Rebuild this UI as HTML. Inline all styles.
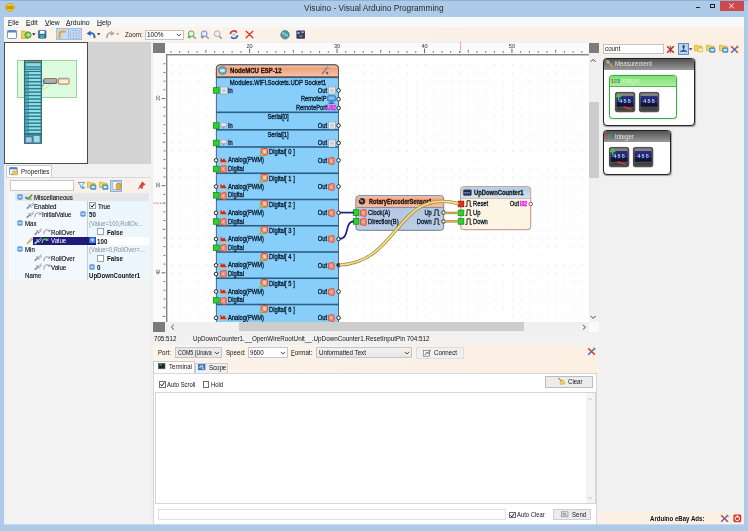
<!DOCTYPE html>
<html lang="en"><head><meta charset="utf-8"><title>Visuino - Visual Arduino Programming</title>
<style>
html,body{margin:0;padding:0;}
body{width:748px;height:531px;position:relative;overflow:hidden;background:#adcbe9;font-family:"Liberation Sans",sans-serif;}
div,svg{position:absolute;}
svg{overflow:visible;}
.t{font-family:"Liberation Sans",sans-serif;}
u{text-decoration-thickness:.5px;text-underline-offset:.2px;text-decoration-color:rgba(0,0,0,.6);}
</style></head><body>
<div id="app" style="left:0;top:0;width:748px;height:531px;filter:blur(.4px);">
<div style="left:0px;top:0px;width:748px;height:531px;background:#adcbe9;"></div>
<div style="left:0px;top:0px;width:748px;height:1px;background:#8fb2d6;"></div>
<div style="left:4px;top:17px;width:740px;height:507px;background:#f1f1f1;"></div>
<div style="left:4px;top:524px;width:740px;height:1px;background:#c9dbee;"></div>
<div class="t" style="top:3px;height:10px;line-height:10px;font-size:8.3px;color:#2a2a2a;white-space:nowrap;left:223.8px;width:300px;text-align:center;">Visuino - Visual Arduino Programming</div>
<svg style="left:5px;top:3.4px;" width="10" height="9" viewBox="0 0 10 9"><ellipse cx="4.8" cy="4.4" rx="4.5" ry="3.9" fill="#f4c81e" stroke="#c9960c" stroke-width=".6"/><path d="M2 3.6h2.3v1.8H2zM5.4 3.6h2.3v1.8H5.4z" fill="none" stroke="#8a5a10" stroke-width=".6"/></svg>
<div style="left:696px;top:7.2px;width:3.6px;height:1px;background:#222;"></div>
<div style="left:710.4px;top:3.8px;width:4.6px;height:3.8px;border:.8px solid #222;border-top-width:1.2px;box-sizing:border-box;"></div>
<div style="left:720px;top:1px;width:24px;height:10.2px;background:#cc4a4b;"></div>
<svg style="left:727px;top:2px;" width="9" height="8" viewBox="0 0 9 8"><path d="M2.2 1.6l4.6 4.6M6.8 1.6l-4.6 4.6" stroke="#fff" stroke-width=".9"/></svg>
<div style="left:4px;top:17px;width:740px;height:9.6px;background:#f7f8f9;"></div>
<div class="t" style="top:18px;height:10px;line-height:10px;font-size:7.2px;color:#111;white-space:nowrap;left:8px;transform:scaleX(0.95);transform-origin:left center;"><u>F</u>ile</div>
<div class="t" style="top:18px;height:10px;line-height:10px;font-size:7.2px;color:#111;white-space:nowrap;left:25.8px;transform:scaleX(0.95);transform-origin:left center;"><u>E</u>dit</div>
<div class="t" style="top:18px;height:10px;line-height:10px;font-size:7.2px;color:#111;white-space:nowrap;left:44.5px;transform:scaleX(0.95);transform-origin:left center;"><u>V</u>iew</div>
<div class="t" style="top:18px;height:10px;line-height:10px;font-size:7.2px;color:#111;white-space:nowrap;left:65.5px;transform:scaleX(0.95);transform-origin:left center;"><u>A</u>rduino</div>
<div class="t" style="top:18px;height:10px;line-height:10px;font-size:7.2px;color:#111;white-space:nowrap;left:97px;transform:scaleX(0.95);transform-origin:left center;"><u>H</u>elp</div>
<div style="left:4px;top:26.6px;width:740px;height:14.6px;background:linear-gradient(90deg,#fcf3ea,#fcefe4);"></div>
<svg style="left:7px;top:29.5px;" width="10" height="9" viewBox="0 0 10 9"><rect x=".5" y=".5" width="9" height="8" rx="1" fill="#fdfdfd" stroke="#5a8fd0" stroke-width=".9"/><rect x=".5" y=".5" width="9" height="2" fill="#4d86cf"/><path d="M6 8.4l3-1v1z" fill="#e8a33a"/></svg>
<svg style="left:20.5px;top:29.5px;" width="11" height="9" viewBox="0 0 11 9"><path d="M.6 1h3l.8 1h2.2v6.4H.6z" fill="#f2d24e" stroke="#b89a20" stroke-width=".6"/><circle cx="7" cy="5" r="3.2" fill="#6cc04a" stroke="#3d8f28" stroke-width=".6"/><path d="M5.4 5h3M7.2 3.6L8.6 5 7.2 6.4" fill="none" stroke="#fff" stroke-width=".8"/></svg>
<svg style="left:32px;top:33px;" width="4" height="3" viewBox="0 0 4 3"><path d="M0 .3h3.6L1.8 2.4z" fill="#222"/></svg>
<svg style="left:37.5px;top:29.8px;" width="8.4" height="8.6" viewBox="0 0 8.4 8.6"><rect x=".4" y=".4" width="7.6" height="7.8" rx=".8" fill="#2f6fc4" stroke="#1d4f99" stroke-width=".6"/><rect x="1.8" y=".8" width="4.8" height="3" fill="#f2f6fb"/><rect x="2.2" y="5.2" width="4" height="3" fill="#58b858"/></svg>
<div style="left:55.5px;top:28px;width:26px;height:11.8px;background:#c4daf2;border:1px solid #9cc0e6;box-sizing:border-box;"></div>
<div style="left:68.4px;top:28.5px;width:0.7px;height:10.8px;background:#9cc0e6;"></div>
<svg style="left:58px;top:29.5px;" width="9" height="9" viewBox="0 0 9 9"><path d="M1.5 8.5V4.2C1.5 2.4 2.8 1.5 4.6 1.5H8" fill="none" stroke="#f0a02c" stroke-width="2.2"/></svg>
<svg style="left:70.2px;top:29.6px;" width="9.6" height="9" viewBox="0 0 9.6 9"><path d="M.5.5h8.6v8H.5zM3.4.5v8M6.3.5v8M.5 3.2h8.6M.5 5.8h8.6" fill="#cfe0f4" stroke="#8fb0da" stroke-width=".55"/></svg>
<svg style="left:86px;top:29.5px;" width="9.5" height="9" viewBox="0 0 9.5 9"><path d="M8.4 8.2C9 4.6 7 2.6 3.8 3.2" fill="none" stroke="#2b62c4" stroke-width="1.9"/><path d="M.6 3.6L4.6.4v5.6z" fill="#2b62c4"/></svg>
<svg style="left:96.6px;top:33.2px;" width="4" height="3" viewBox="0 0 4 3"><path d="M0 .3h3.4L1.7 2.3z" fill="#222"/></svg>
<svg style="left:105.5px;top:29.5px;" width="9.5" height="9" viewBox="0 0 9.5 9"><path d="M1.1 8.2C.5 4.6 2.5 2.6 5.7 3.2" fill="none" stroke="#a9acb2" stroke-width="1.7"/><path d="M8.9 3.6L4.9.4v5.6z" fill="#a9acb2"/></svg>
<svg style="left:115.6px;top:33.2px;" width="4" height="3" viewBox="0 0 4 3"><path d="M0 .3h3.4L1.7 2.3z" fill="#999"/></svg>
<div class="t" style="top:30px;height:10px;line-height:10px;font-size:6.6px;color:#222;white-space:nowrap;left:125px;transform:scaleX(0.95);transform-origin:left center;">Zoom:</div>
<div style="left:144.5px;top:29.5px;width:39.5px;height:10.2px;background:#fff;border:1px solid #bfc3c9;box-sizing:border-box;"></div>
<div class="t" style="top:30px;height:10px;line-height:10px;font-size:6.8px;color:#111;white-space:nowrap;left:147px;transform:scaleX(0.95);transform-origin:left center;">100%</div>
<svg style="left:176px;top:32.6px;" width="6" height="4.5" viewBox="0 0 6 4.5"><path d="M.8.9l2.1 2.1L5 .9" fill="none" stroke="#333" stroke-width=".9"/></svg>
<svg style="left:187px;top:29.8px;" width="10" height="9.6" viewBox="0 0 10 9.6"><path d="M5.4 5.4L8.8 8.8" stroke="#9a9f88" stroke-width="1.5"/><circle cx="4.2" cy="3.8" r="2.9" fill="#e2f3e0" stroke="#5fae62" stroke-width="1"/><path d="M2.2 5.4v3.2M.6 7h3.2" stroke="#4aa83c" stroke-width="1.2"/></svg>
<svg style="left:200px;top:29.8px;" width="10" height="9.6" viewBox="0 0 10 9.6"><path d="M5.4 5.4L8.8 8.8" stroke="#9a9f88" stroke-width="1.5"/><circle cx="4.2" cy="3.8" r="2.9" fill="#e2ecf8" stroke="#6a92c8" stroke-width="1"/><path d="M2.2 5.4v3.2M.6 7h3.2" stroke="#5f8ad0" stroke-width="1.2"/></svg>
<svg style="left:212.6px;top:29.8px;" width="10" height="9.6" viewBox="0 0 10 9.6"><path d="M5.4 5.4L8.8 8.8" stroke="#9a9f88" stroke-width="1.5"/><circle cx="4.2" cy="3.8" r="2.9" fill="#eef0f3" stroke="#aab0ba" stroke-width="1"/></svg>
<svg style="left:228.5px;top:29.6px;" width="10" height="9.4" viewBox="0 0 10 9.4"><path d="M1.4 4.2A3.6 3.6 0 0 1 8 2.6" fill="none" stroke="#d0343c" stroke-width="1.6"/><path d="M8.6 5.2A3.6 3.6 0 0 1 2 6.8" fill="none" stroke="#3a62b8" stroke-width="1.6"/><rect x="3.4" y="3.2" width="3.2" height="3" fill="#c9ccd6"/></svg>
<svg style="left:245.2px;top:30px;" width="9" height="9" viewBox="0 0 9 9"><path d="M1.2 1.2l6.6 6.6M7.8 1.2L1.2 7.8" stroke="#d83434" stroke-width="1.3" stroke-linecap="round"/></svg>
<svg style="left:280px;top:29.6px;" width="10" height="9.6" viewBox="0 0 10 9.6"><circle cx="5" cy="4.8" r="4.3" fill="#3f9fb0" stroke="#2c7482" stroke-width=".6"/><path d="M2 3.4c1.4-1 2.6-.4 3 1s1.8 1.4 2.8.4" fill="none" stroke="#d8f0f0" stroke-width="1"/><circle cx="3" cy="6.6" r="1.3" fill="#e06a3a"/></svg>
<svg style="left:296.2px;top:29.8px;" width="9.4" height="9.2" viewBox="0 0 9.4 9.2"><rect x=".4" y=".4" width="8.6" height="8.4" rx=".8" fill="#2c4468"/><path d="M1.6 2h2v2h-2zM5.4 1.6h2.4v1.4H5.4z" fill="#9fb6d6"/><path d="M3 6.4l2-1.8 2.2 2.6z" fill="#e6603c"/></svg>
<div style="left:4px;top:41.6px;width:84px;height:122.6px;background:#fff;border:1px solid #4a4a4a;border-width:1.2px 1.2px 1.2px 1px;box-sizing:border-box;"></div>
<div style="left:88px;top:41.6px;width:62.6px;height:122.4px;background:#d3d3d3;"></div>
<div style="left:150.6px;top:41.6px;width:2.2px;height:482px;background:#f0f0f0;"></div>
<div style="left:17px;top:59.8px;width:60.2px;height:38.2px;background:#ddfbdf;border:1px solid #9ad69a;box-sizing:border-box;"></div>
<svg style="left:24.2px;top:60.2px;" width="17.8" height="83.8" viewBox="0 0 17.8 83.8"><rect x=".4" y=".4" width="17" height="83" fill="#46a5b2" stroke="#275c66" stroke-width=".9"/><rect x=".9" y=".9" width="16" height="1.5" fill="#9a8f80"/><rect x="2.2" y="3.1" width="14.2" height="3.4" fill="#86dbe6"/><path d="M.4 2.6h17" stroke="#275c66" stroke-width=".7"/><rect x="1.4" y="7.35" width="15.2" height="1.4" fill="#7fd4e0"/><path d="M.4 6.9h17" stroke="#275c66" stroke-width=".7"/><rect x="1.4" y="9.65" width="15.2" height="1.4" fill="#7fd4e0"/><path d="M.4 9.2h17" stroke="#275c66" stroke-width=".7"/><rect x="1.2" y="12" width="3.4" height="2.45" fill="#5fa8c0"/><rect x="5" y="12.1" width="11.4" height="1.95" fill="#8fe2ec"/><path d="M.4 11.5h17" stroke="#275c66" stroke-width=".7"/><rect x="1.2" y="15.45" width="3.4" height="2.45" fill="#5fa8c0"/><rect x="5" y="15.55" width="11.4" height="1.95" fill="#8fe2ec"/><path d="M.4 14.95h17" stroke="#275c66" stroke-width=".7"/><rect x="1.2" y="18.9" width="3.4" height="2.45" fill="#5fa8c0"/><rect x="5" y="19" width="11.4" height="1.95" fill="#8fe2ec"/><path d="M.4 18.4h17" stroke="#275c66" stroke-width=".7"/><rect x="1.2" y="22.35" width="3.4" height="2.45" fill="#5fa8c0"/><rect x="5" y="22.45" width="11.4" height="1.95" fill="#8fe2ec"/><path d="M.4 21.85h17" stroke="#275c66" stroke-width=".7"/><rect x="1.2" y="25.8" width="3.4" height="2.45" fill="#5fa8c0"/><rect x="5" y="25.9" width="11.4" height="1.95" fill="#8fe2ec"/><path d="M.4 25.3h17" stroke="#275c66" stroke-width=".7"/><rect x="1.2" y="29.25" width="3.4" height="2.45" fill="#5fa8c0"/><rect x="5" y="29.35" width="11.4" height="1.95" fill="#8fe2ec"/><path d="M.4 28.75h17" stroke="#275c66" stroke-width=".7"/><rect x="1.2" y="32.7" width="3.4" height="2.45" fill="#5fa8c0"/><rect x="5" y="32.8" width="11.4" height="1.95" fill="#8fe2ec"/><path d="M.4 32.2h17" stroke="#275c66" stroke-width=".7"/><rect x="1.2" y="36.15" width="3.4" height="2.45" fill="#5fa8c0"/><rect x="5" y="36.25" width="11.4" height="1.95" fill="#8fe2ec"/><path d="M.4 35.65h17" stroke="#275c66" stroke-width=".7"/><rect x="1.2" y="39.6" width="3.4" height="2.45" fill="#5fa8c0"/><rect x="5" y="39.7" width="11.4" height="1.95" fill="#8fe2ec"/><path d="M.4 39.1h17" stroke="#275c66" stroke-width=".7"/><rect x="1.2" y="43.05" width="3.4" height="2.45" fill="#5fa8c0"/><rect x="5" y="43.15" width="11.4" height="1.95" fill="#8fe2ec"/><path d="M.4 42.55h17" stroke="#275c66" stroke-width=".7"/><rect x="1.2" y="46.5" width="3.4" height="2.45" fill="#5fa8c0"/><rect x="5" y="46.6" width="11.4" height="1.95" fill="#8fe2ec"/><path d="M.4 46h17" stroke="#275c66" stroke-width=".7"/><rect x="1.2" y="49.95" width="3.4" height="2.45" fill="#5fa8c0"/><rect x="5" y="50.05" width="11.4" height="1.95" fill="#8fe2ec"/><path d="M.4 49.45h17" stroke="#275c66" stroke-width=".7"/><rect x="1.2" y="53.4" width="3.4" height="2.45" fill="#5fa8c0"/><rect x="5" y="53.5" width="11.4" height="1.95" fill="#8fe2ec"/><path d="M.4 52.9h17" stroke="#275c66" stroke-width=".7"/><rect x="1.2" y="56.85" width="3.4" height="2.45" fill="#5fa8c0"/><rect x="5" y="56.95" width="11.4" height="1.95" fill="#8fe2ec"/><path d="M.4 56.35h17" stroke="#275c66" stroke-width=".7"/><rect x="1.2" y="60.3" width="3.4" height="2.45" fill="#5fa8c0"/><rect x="5" y="60.4" width="11.4" height="1.95" fill="#8fe2ec"/><path d="M.4 59.8h17" stroke="#275c66" stroke-width=".7"/><rect x="1.2" y="63.75" width="3.4" height="2.45" fill="#5fa8c0"/><rect x="5" y="63.85" width="11.4" height="1.95" fill="#8fe2ec"/><path d="M.4 63.25h17" stroke="#275c66" stroke-width=".7"/><rect x="1.2" y="67.2" width="3.4" height="2.45" fill="#5fa8c0"/><rect x="5" y="67.3" width="11.4" height="1.95" fill="#8fe2ec"/><path d="M.4 66.7h17" stroke="#275c66" stroke-width=".7"/><rect x="1.2" y="70.65" width="3.4" height="2.45" fill="#5fa8c0"/><rect x="5" y="70.75" width="11.4" height="1.95" fill="#8fe2ec"/><path d="M.4 70.15h17" stroke="#275c66" stroke-width=".7"/><rect x="1.2" y="74.1" width="3.4" height="2.45" fill="#5fa8c0"/><rect x="5" y="74.2" width="11.4" height="1.95" fill="#8fe2ec"/><path d="M.4 73.6h17" stroke="#275c66" stroke-width=".7"/><rect x="1.2" y="77.55" width="3.4" height="2.45" fill="#5fa8c0"/><rect x="5" y="77.65" width="11.4" height="1.95" fill="#8fe2ec"/><path d="M.4 77.05h17" stroke="#275c66" stroke-width=".7"/><rect x=".8" y="74.6" width="16.2" height="8.6" fill="#4a8fae"/><rect x="1.6" y="77" width="6.4" height="5.8" fill="#a9c9e4" stroke="#2a4a66" stroke-width=".4"/><rect x="9.2" y="75.4" width="6.8" height="7.4" fill="#9fdbe8" stroke="#2a4a66" stroke-width=".4"/><path d="M.4 74.6h17" stroke="#275c66" stroke-width=".7"/></svg>
<svg style="left:43px;top:78.4px;" width="27" height="7" viewBox="0 0 27 7"><rect x=".8" y=".8" width="13" height="4.6" rx=".6" fill="#9fb2c8" stroke="#3a4a42" stroke-width=".9"/><rect x="1.3" y="1.2" width="12" height="1.3" fill="#e0a58c"/><rect x="15.6" y=".3" width="10.4" height="5.8" rx=".6" fill="#fbeedd" stroke="#b5652c" stroke-width=".9"/><rect x="16.2" y=".8" width="9.2" height="1.3" fill="#b9d3e8"/><path d="M13.8 2.8h2M13.8 4h2" stroke="#c9a63a" stroke-width=".5"/></svg>
<svg style="left:40px;top:80px;" width="12" height="10" viewBox="0 0 12 10"><path d="M2 1.2h2M2 6.6C4 6.6 2.8 2.6 4.2 2.6" fill="none" stroke="#2a2a90" stroke-width=".5"/><path d="M2 9.2C9 9 9 2 19 1" fill="none" stroke="#c9b04a" stroke-width=".5"/></svg>
<div style="left:6px;top:165px;width:45.6px;height:12.4px;background:#fff;border:1px solid #c9cdd3;border-bottom:none;box-sizing:border-box;"></div>
<svg style="left:8.6px;top:167px;" width="9" height="8.6" viewBox="0 0 9 8.6"><rect x=".5" y=".5" width="7.6" height="7" rx=".8" fill="#eef3fa" stroke="#5a82bf" stroke-width=".8"/><rect x=".5" y=".5" width="7.6" height="1.8" fill="#4d7fc8"/><rect x="3.8" y="4" width="4.6" height="4" fill="#f2c45a" stroke="#b98a22" stroke-width=".4"/></svg>
<div class="t" style="top:167px;height:10px;line-height:10px;font-size:6.7px;color:#1a1a1a;white-space:nowrap;left:20.6px;transform:scaleX(0.93);transform-origin:left center;">Properties</div>
<div style="left:6px;top:176.8px;width:144.4px;height:347.2px;background:#f3f3f3;border-top:1px solid #d4d7dc;box-sizing:border-box;"></div>
<div style="left:8.6px;top:179.2px;width:140.4px;height:101px;background:#ecf6fd;"></div>
<div style="left:8.6px;top:192.6px;width:78.8px;height:87.6px;background:#f2f8fd;"></div>
<div style="left:8.6px;top:179.2px;width:140.4px;height:13.4px;background:#fbf1e8;"></div>
<div style="left:10px;top:180.2px;width:64.4px;height:10.8px;background:#fff;border:1px solid #c6cad0;box-sizing:border-box;"></div>
<svg style="left:76.5px;top:181.2px;" width="9" height="9" viewBox="0 0 9 9"><path d="M1 1.4h6.8L5.2 4.4v3L3.6 6.2V4.4z" fill="#eaf3fb" stroke="#4a8cc9" stroke-width=".8"/><circle cx="6.4" cy="6.8" r="1.3" fill="#5aa0dc"/></svg>
<svg style="left:86.6px;top:181px;" width="10" height="9.4" viewBox="0 0 10 9.4"><path d="M.5 1.2h3l.7.9h3.6v4.6H.5z" fill="#f4d55a" stroke="#b89a24" stroke-width=".55"/><rect x="3.6" y="3.8" width="5.4" height="4.6" rx=".6" fill="#58a6dc" stroke="#2e78b4" stroke-width=".5"/><rect x="4.8" y="5" width="3" height="2" fill="#d4ecfa"/></svg>
<svg style="left:98.6px;top:181px;" width="10" height="9.4" viewBox="0 0 10 9.4"><path d="M.5 1.2h3l.7.9h3.6v4.6H.5z" fill="#f4d55a" stroke="#b89a24" stroke-width=".55"/><rect x="3.6" y="3.8" width="5.4" height="4.6" rx=".6" fill="#58a6dc" stroke="#2e78b4" stroke-width=".5"/><rect x="4.8" y="5" width="3" height="2" fill="#d4ecfa"/></svg>
<div style="left:110.4px;top:180.2px;width:11.6px;height:11.4px;background:#bcd6f0;border:1px solid #86b2de;box-sizing:border-box;"></div>
<svg style="left:111.6px;top:181.2px;" width="9.4" height="9.4" viewBox="0 0 9.4 9.4"><rect x="1" y=".8" width="5" height="7.6" fill="#fff" stroke="#8a94a4" stroke-width=".5"/><rect x="4.2" y="2.6" width="4.4" height="6" rx=".6" fill="#f0a648" stroke="#b8741c" stroke-width=".5"/></svg>
<svg style="left:136.5px;top:181.4px;" width="9" height="9" viewBox="0 0 9 9"><path d="M5.4.8l2.8 2.8-1.2.4-1.6 1.6.2 1.8-1 .2L2.4 5.4z" fill="#e04438" stroke="#a82018" stroke-width=".4"/><path d="M3.4 5.6L.9 8.2" stroke="#8a3a34" stroke-width=".8"/></svg>
<div style="left:15px;top:192.6px;width:134px;height:8.72px;background:#e4e6e9;"></div>
<div style="left:87.4px;top:201.32px;width:0.8px;height:78.48px;background:#c4ccd6;"></div>
<div style="left:32.6px;top:237px;width:63.6px;height:8px;background:#1e1b7c;"></div>
<div style="left:96.2px;top:237px;width:52.8px;height:8px;background:#fff;"></div>
<svg style="left:17px;top:193.96px;" width="6" height="6" viewBox="0 0 6 6"><rect x=".3" y=".3" width="5.4" height="5.4" rx="1.4" fill="#5f9fdc"/><rect x="1.4" y="2.4" width="3.2" height="1.2" fill="#eaf4ff"/></svg>
<svg style="left:23.5px;top:192.96px;" width="9" height="8" viewBox="0 0 9 8"><path d="M.6 4.6l2-1 2 1.6-2 1.2z" fill="#3f8ad0"/><path d="M3.4 5.8L7.6 1.4l.8.8L4.4 7z" fill="#4caf50" stroke="#2a7a2e" stroke-width=".4"/><circle cx="6.6" cy="6" r="1.2" fill="#e8a23c"/></svg>
<div class="t" style="top:193px;height:10px;line-height:10px;font-size:6.8px;color:#161616;white-space:nowrap;left:33.5px;transform:scaleX(0.9);transform-origin:left center;-webkit-text-stroke:.15px;">Miscellaneous</div>
<svg style="left:25.5px;top:201.88px;" width="8.4" height="7.6" viewBox="0 0 8.4 7.6"><path d="M1.2 6.4l2.2-2.2" fill="none" stroke="#8a8f98" stroke-width="1.5"/><path d="M2.6 2.4l2.8 2.8" fill="none" stroke="#8a8f98" stroke-width="1.3"/><path d="M4.6 1.8l2 2M5.6 2.2L7.6.4M6.2 3.4l1.8-1.4" fill="none" stroke="#8a8f98" stroke-width=".8"/><circle cx="1.3" cy="6.3" r="1" fill="#8a8f98" opacity=".7"/></svg>
<div class="t" style="top:202px;height:10px;line-height:10px;font-size:6.8px;color:#161616;white-space:nowrap;left:33.8px;transform:scaleX(0.9);transform-origin:left center;-webkit-text-stroke:.15px;">Enabled</div>
<div style="left:89.4px;top:202.18px;width:7px;height:7px;background:#fff;border:1px solid #9aa1aa;box-sizing:border-box;"></div>
<svg style="left:89.4px;top:202.18px;" width="7" height="7" viewBox="0 0 7 7"><path d="M1.6 3.6l1.4 1.6L5.4 1.8" fill="none" stroke="#111" stroke-width="1"/></svg>
<div class="t" style="top:202px;height:10px;line-height:10px;font-size:6.8px;color:#161616;white-space:nowrap;left:97.6px;transform:scaleX(0.9);transform-origin:left center;-webkit-text-stroke:.15px;">True</div>
<svg style="left:25.5px;top:210.6px;" width="8.4" height="7.6" viewBox="0 0 8.4 7.6"><path d="M1.2 6.4l2.2-2.2" fill="none" stroke="#8a8f98" stroke-width="1.5"/><path d="M2.6 2.4l2.8 2.8" fill="none" stroke="#8a8f98" stroke-width="1.3"/><path d="M4.6 1.8l2 2M5.6 2.2L7.6.4M6.2 3.4l1.8-1.4" fill="none" stroke="#8a8f98" stroke-width=".8"/><circle cx="1.3" cy="6.3" r="1" fill="#8a8f98" opacity=".7"/></svg>
<svg style="left:33.6px;top:211px;" width="8" height="6.8" viewBox="0 0 8 6.8"><path d="M.9 6.2C.6 2.2 3.6.6 6.4 2.6" fill="none" stroke="#9aa0a8" stroke-width="1.1"/><path d="M7.4.8v3H4.4z" fill="#9aa0a8"/></svg>
<div class="t" style="top:210px;height:10px;line-height:10px;font-size:6.8px;color:#161616;white-space:nowrap;left:42.4px;transform:scaleX(0.9);transform-origin:left center;-webkit-text-stroke:.15px;">InitialValue</div>
<svg style="left:79.6px;top:211.4px;" width="6" height="6" viewBox="0 0 6 6"><rect x=".3" y=".3" width="5.4" height="5.4" rx="1.4" fill="#5f9fdc"/><rect x="1.4" y="2.4" width="3.2" height="1.2" fill="#eaf4ff"/></svg>
<div class="t" style="top:210px;height:10px;line-height:10px;font-size:6.9px;color:#111;white-space:nowrap;font-weight:bold;left:89px;transform:scaleX(0.9);transform-origin:left center;">50</div>
<svg style="left:17px;top:220.12px;" width="6" height="6" viewBox="0 0 6 6"><rect x=".3" y=".3" width="5.4" height="5.4" rx="1.4" fill="#5f9fdc"/><rect x="1.4" y="2.4" width="3.2" height="1.2" fill="#eaf4ff"/></svg>
<div class="t" style="top:219px;height:10px;line-height:10px;font-size:6.8px;color:#161616;white-space:nowrap;left:24.6px;transform:scaleX(0.9);transform-origin:left center;-webkit-text-stroke:.15px;">Max</div>
<div class="t" style="top:219px;height:10px;line-height:10px;font-size:6.8px;color:#8a8f96;white-space:nowrap;left:89px;transform:scaleX(0.86);transform-origin:left center;">(Value=100,RollOv...</div>
<svg style="left:34.4px;top:228.04px;" width="8.4" height="7.6" viewBox="0 0 8.4 7.6"><path d="M1.2 6.4l2.2-2.2" fill="none" stroke="#8a8f98" stroke-width="1.5"/><path d="M2.6 2.4l2.8 2.8" fill="none" stroke="#8a8f98" stroke-width="1.3"/><path d="M4.6 1.8l2 2M5.6 2.2L7.6.4M6.2 3.4l1.8-1.4" fill="none" stroke="#8a8f98" stroke-width=".8"/><circle cx="1.3" cy="6.3" r="1" fill="#8a8f98" opacity=".7"/></svg>
<svg style="left:42.6px;top:228.44px;" width="8" height="6.8" viewBox="0 0 8 6.8"><path d="M.9 6.2C.6 2.2 3.6.6 6.4 2.6" fill="none" stroke="#9aa0a8" stroke-width="1.1"/><path d="M7.4.8v3H4.4z" fill="#9aa0a8"/></svg>
<div class="t" style="top:228px;height:10px;line-height:10px;font-size:6.8px;color:#161616;white-space:nowrap;left:51.4px;transform:scaleX(0.9);transform-origin:left center;-webkit-text-stroke:.15px;">RollOver</div>
<div style="left:97.4px;top:228.34px;width:7px;height:7px;background:#fff;border:1px solid #9aa1aa;box-sizing:border-box;"></div>
<div class="t" style="top:228px;height:10px;line-height:10px;font-size:6.9px;color:#111;white-space:nowrap;font-weight:bold;left:106.6px;transform:scaleX(0.9);transform-origin:left center;">False</div>
<svg style="left:26px;top:236.56px;" width="8" height="8" viewBox="0 0 8 8"><path d="M1 7l1-2.4L6 .8l1.2 1.2-4 3.8z" fill="#e8c070" stroke="#9a7a3a" stroke-width=".4"/></svg>
<svg style="left:33.6px;top:236.76px;" width="8.4" height="7.6" viewBox="0 0 8.4 7.6"><path d="M1.2 6.4l2.2-2.2" fill="none" stroke="#c9d4ea" stroke-width="1.5"/><path d="M2.6 2.4l2.8 2.8" fill="none" stroke="#c9d4ea" stroke-width="1.3"/><path d="M4.6 1.8l2 2M5.6 2.2L7.6.4M6.2 3.4l1.8-1.4" fill="none" stroke="#c9d4ea" stroke-width=".8"/><circle cx="1.3" cy="6.3" r="1" fill="#c9d4ea" opacity=".7"/></svg>
<svg style="left:41.4px;top:237.16px;" width="8" height="7" viewBox="0 0 8 7"><path d="M1.2 6C1 2.4 3.6 1 6.2 2.8" fill="none" stroke="#5ec04a" stroke-width="1.5"/><path d="M7.4.8v3.2H4.2z" fill="#5ec04a"/></svg>
<div class="t" style="top:236px;height:10px;line-height:10px;font-size:6.8px;color:#fff;white-space:nowrap;left:51.4px;transform:scaleX(0.9);transform-origin:left center;">Value</div>
<svg style="left:88.8px;top:237.36px;" width="7" height="6.4" viewBox="0 0 7 6.4"><rect x=".3" y=".3" width="6.2" height="5.8" rx="1.2" fill="#4f8fe0"/><path d="M1.8 2.2h3.2L3.4 4.4z" fill="#fff"/></svg>
<div class="t" style="top:237px;height:10px;line-height:10px;font-size:6.9px;color:#111;white-space:nowrap;font-weight:bold;left:97.4px;transform:scaleX(0.9);transform-origin:left center;">100</div>
<svg style="left:17px;top:246.28000000000003px;" width="6" height="6" viewBox="0 0 6 6"><rect x=".3" y=".3" width="5.4" height="5.4" rx="1.4" fill="#5f9fdc"/><rect x="1.4" y="2.4" width="3.2" height="1.2" fill="#eaf4ff"/></svg>
<div class="t" style="top:245px;height:10px;line-height:10px;font-size:6.8px;color:#161616;white-space:nowrap;left:24.6px;transform:scaleX(0.9);transform-origin:left center;-webkit-text-stroke:.15px;">Min</div>
<div class="t" style="top:245px;height:10px;line-height:10px;font-size:6.8px;color:#8a8f96;white-space:nowrap;left:89px;transform:scaleX(0.86);transform-origin:left center;">(Value=0,RollOver=...</div>
<svg style="left:34.4px;top:254.2px;" width="8.4" height="7.6" viewBox="0 0 8.4 7.6"><path d="M1.2 6.4l2.2-2.2" fill="none" stroke="#8a8f98" stroke-width="1.5"/><path d="M2.6 2.4l2.8 2.8" fill="none" stroke="#8a8f98" stroke-width="1.3"/><path d="M4.6 1.8l2 2M5.6 2.2L7.6.4M6.2 3.4l1.8-1.4" fill="none" stroke="#8a8f98" stroke-width=".8"/><circle cx="1.3" cy="6.3" r="1" fill="#8a8f98" opacity=".7"/></svg>
<svg style="left:42.6px;top:254.6px;" width="8" height="6.8" viewBox="0 0 8 6.8"><path d="M.9 6.2C.6 2.2 3.6.6 6.4 2.6" fill="none" stroke="#9aa0a8" stroke-width="1.1"/><path d="M7.4.8v3H4.4z" fill="#9aa0a8"/></svg>
<div class="t" style="top:254px;height:10px;line-height:10px;font-size:6.8px;color:#161616;white-space:nowrap;left:51.4px;transform:scaleX(0.9);transform-origin:left center;-webkit-text-stroke:.15px;">RollOver</div>
<div style="left:97.4px;top:254.5px;width:7px;height:7px;background:#fff;border:1px solid #9aa1aa;box-sizing:border-box;"></div>
<div class="t" style="top:254px;height:10px;line-height:10px;font-size:6.9px;color:#111;white-space:nowrap;font-weight:bold;left:106.6px;transform:scaleX(0.9);transform-origin:left center;">False</div>
<svg style="left:34.4px;top:262.92px;" width="8.4" height="7.6" viewBox="0 0 8.4 7.6"><path d="M1.2 6.4l2.2-2.2" fill="none" stroke="#8a8f98" stroke-width="1.5"/><path d="M2.6 2.4l2.8 2.8" fill="none" stroke="#8a8f98" stroke-width="1.3"/><path d="M4.6 1.8l2 2M5.6 2.2L7.6.4M6.2 3.4l1.8-1.4" fill="none" stroke="#8a8f98" stroke-width=".8"/><circle cx="1.3" cy="6.3" r="1" fill="#8a8f98" opacity=".7"/></svg>
<svg style="left:42.6px;top:263.32000000000005px;" width="8" height="6.8" viewBox="0 0 8 6.8"><path d="M.9 6.2C.6 2.2 3.6.6 6.4 2.6" fill="none" stroke="#9aa0a8" stroke-width="1.1"/><path d="M7.4.8v3H4.4z" fill="#9aa0a8"/></svg>
<div class="t" style="top:263px;height:10px;line-height:10px;font-size:6.8px;color:#161616;white-space:nowrap;left:51.4px;transform:scaleX(0.9);transform-origin:left center;-webkit-text-stroke:.15px;">Value</div>
<svg style="left:88.8px;top:263.72px;" width="6" height="6" viewBox="0 0 6 6"><rect x=".3" y=".3" width="5.4" height="5.4" rx="1.4" fill="#5f9fdc"/><rect x="1.4" y="2.4" width="3.2" height="1.2" fill="#eaf4ff"/></svg>
<div class="t" style="top:263px;height:10px;line-height:10px;font-size:6.9px;color:#111;white-space:nowrap;font-weight:bold;left:97.4px;transform:scaleX(0.9);transform-origin:left center;">0</div>
<div class="t" style="top:271px;height:10px;line-height:10px;font-size:6.8px;color:#161616;white-space:nowrap;left:24.6px;transform:scaleX(0.9);transform-origin:left center;-webkit-text-stroke:.15px;">Name</div>
<div class="t" style="top:271px;height:10px;line-height:10px;font-size:6.9px;color:#111;white-space:nowrap;font-weight:bold;left:89px;transform:scaleX(0.88);transform-origin:left center;">UpDownCounter1</div>
<div style="left:153px;top:42.6px;width:445.6px;height:289.4px;background:#fbfbfb;"></div>
<div style="left:153px;top:42.8px;width:12px;height:10.4px;background:#7b7b7b;"></div>
<div style="left:588.6px;top:42.8px;width:10px;height:10.4px;background:#7b7b7b;"></div>
<div style="left:153px;top:322px;width:12px;height:10px;background:#7b7b7b;"></div>
<svg style="left:153px;top:42px;" width="436" height="12" viewBox="0 0 436 12"><path d="M17.9 9.2v1.6" stroke="#555" stroke-width=".9"/><path d="M26.64 9.2v1.6" stroke="#555" stroke-width=".9"/><path d="M35.38 9.2v1.6" stroke="#555" stroke-width=".9"/><path d="M44.13 9.2v1.6" stroke="#555" stroke-width=".9"/><path d="M52.88 7.8v3" stroke="#555" stroke-width=".8"/><path d="M61.62 9.2v1.6" stroke="#555" stroke-width=".9"/><path d="M70.37 9.2v1.6" stroke="#555" stroke-width=".9"/><path d="M79.11 9.2v1.6" stroke="#555" stroke-width=".9"/><path d="M87.85 9.2v1.6" stroke="#555" stroke-width=".9"/><path d="M96.6 6.6v4.4" stroke="#444" stroke-width=".8"/><path d="M105.35 9.2v1.6" stroke="#555" stroke-width=".9"/><path d="M114.09 9.2v1.6" stroke="#555" stroke-width=".9"/><path d="M122.84 9.2v1.6" stroke="#555" stroke-width=".9"/><path d="M131.58 9.2v1.6" stroke="#555" stroke-width=".9"/><path d="M140.32 7.8v3" stroke="#555" stroke-width=".8"/><path d="M149.07 9.2v1.6" stroke="#555" stroke-width=".9"/><path d="M157.81 9.2v1.6" stroke="#555" stroke-width=".9"/><path d="M166.56 9.2v1.6" stroke="#555" stroke-width=".9"/><path d="M175.31 9.2v1.6" stroke="#555" stroke-width=".9"/><path d="M184.05 6.6v4.4" stroke="#444" stroke-width=".8"/><path d="M192.79 9.2v1.6" stroke="#555" stroke-width=".9"/><path d="M201.54 9.2v1.6" stroke="#555" stroke-width=".9"/><path d="M210.28 9.2v1.6" stroke="#555" stroke-width=".9"/><path d="M219.03 9.2v1.6" stroke="#555" stroke-width=".9"/><path d="M227.77 7.8v3" stroke="#555" stroke-width=".8"/><path d="M236.52 9.2v1.6" stroke="#555" stroke-width=".9"/><path d="M245.26 9.2v1.6" stroke="#555" stroke-width=".9"/><path d="M254.01 9.2v1.6" stroke="#555" stroke-width=".9"/><path d="M262.75 9.2v1.6" stroke="#555" stroke-width=".9"/><path d="M271.5 6.6v4.4" stroke="#444" stroke-width=".8"/><path d="M280.25 9.2v1.6" stroke="#555" stroke-width=".9"/><path d="M288.99 9.2v1.6" stroke="#555" stroke-width=".9"/><path d="M297.74 9.2v1.6" stroke="#555" stroke-width=".9"/><path d="M306.48 9.2v1.6" stroke="#555" stroke-width=".9"/><path d="M315.23 7.8v3" stroke="#555" stroke-width=".8"/><path d="M323.97 9.2v1.6" stroke="#555" stroke-width=".9"/><path d="M332.72 9.2v1.6" stroke="#555" stroke-width=".9"/><path d="M341.46 9.2v1.6" stroke="#555" stroke-width=".9"/><path d="M350.2 9.2v1.6" stroke="#555" stroke-width=".9"/><path d="M358.95 6.6v4.4" stroke="#444" stroke-width=".8"/><path d="M367.69 9.2v1.6" stroke="#555" stroke-width=".9"/><path d="M376.44 9.2v1.6" stroke="#555" stroke-width=".9"/><path d="M385.18 9.2v1.6" stroke="#555" stroke-width=".9"/><path d="M393.93 9.2v1.6" stroke="#555" stroke-width=".9"/><path d="M402.67 7.8v3" stroke="#555" stroke-width=".8"/><path d="M411.42 9.2v1.6" stroke="#555" stroke-width=".9"/><path d="M420.16 9.2v1.6" stroke="#555" stroke-width=".9"/><path d="M428.91 9.2v1.6" stroke="#555" stroke-width=".9"/><path d="M307.6 .2v10.8" stroke="#e0407a" stroke-width=".9" stroke-dasharray="1.2 1"/></svg>
<div class="t" style="top:41px;height:10px;line-height:10px;font-size:5.6px;color:#333;white-space:nowrap;left:99.6px;width:300px;text-align:center;">20</div>
<div class="t" style="top:41px;height:10px;line-height:10px;font-size:5.6px;color:#333;white-space:nowrap;left:187.04999999999995px;width:300px;text-align:center;">30</div>
<div class="t" style="top:41px;height:10px;line-height:10px;font-size:5.6px;color:#333;white-space:nowrap;left:274.5px;width:300px;text-align:center;">40</div>
<div class="t" style="top:41px;height:10px;line-height:10px;font-size:5.6px;color:#333;white-space:nowrap;left:361.94999999999993px;width:300px;text-align:center;">50</div>
<svg style="left:153px;top:42.6px;" width="13" height="279" viewBox="0 0 13 279"><path d="M10.6 20.76h1.7" stroke="#555" stroke-width=".9"/><path d="M10.6 29.47h1.7" stroke="#555" stroke-width=".9"/><path d="M10.6 38.18h1.7" stroke="#555" stroke-width=".9"/><path d="M10.6 46.89h1.7" stroke="#555" stroke-width=".9"/><path d="M8.6 55.6h3.8" stroke="#444" stroke-width=".8"/><path d="M10.6 64.31h1.7" stroke="#555" stroke-width=".9"/><path d="M10.6 73.02h1.7" stroke="#555" stroke-width=".9"/><path d="M10.6 81.73h1.7" stroke="#555" stroke-width=".9"/><path d="M10.6 90.44h1.7" stroke="#555" stroke-width=".9"/><path d="M9.6 99.15h2.8" stroke="#555" stroke-width=".8"/><path d="M10.6 107.86h1.7" stroke="#555" stroke-width=".9"/><path d="M10.6 116.57h1.7" stroke="#555" stroke-width=".9"/><path d="M10.6 125.28h1.7" stroke="#555" stroke-width=".9"/><path d="M10.6 133.99h1.7" stroke="#555" stroke-width=".9"/><path d="M8.6 142.7h3.8" stroke="#444" stroke-width=".8"/><path d="M10.6 151.41h1.7" stroke="#555" stroke-width=".9"/><path d="M10.6 160.12h1.7" stroke="#555" stroke-width=".9"/><path d="M10.6 168.83h1.7" stroke="#555" stroke-width=".9"/><path d="M10.6 177.54h1.7" stroke="#555" stroke-width=".9"/><path d="M9.6 186.25h2.8" stroke="#555" stroke-width=".8"/><path d="M10.6 194.96h1.7" stroke="#555" stroke-width=".9"/><path d="M10.6 203.67h1.7" stroke="#555" stroke-width=".9"/><path d="M10.6 212.38h1.7" stroke="#555" stroke-width=".9"/><path d="M10.6 221.09h1.7" stroke="#555" stroke-width=".9"/><path d="M8.6 229.8h3.8" stroke="#444" stroke-width=".8"/><path d="M10.6 238.51h1.7" stroke="#555" stroke-width=".9"/><path d="M10.6 247.22h1.7" stroke="#555" stroke-width=".9"/><path d="M10.6 255.93h1.7" stroke="#555" stroke-width=".9"/><path d="M10.6 264.64h1.7" stroke="#555" stroke-width=".9"/><path d="M9.6 273.35h2.8" stroke="#555" stroke-width=".8"/><path d="M.4 160.20000000000002h11.6" stroke="#e0407a" stroke-width=".9" stroke-dasharray="1.2 1"/></svg>
<div class="t" style="left:148px;top:93.2px;width:20px;height:10px;line-height:10px;text-align:center;font-size:5.4px;color:#333;transform:rotate(-90deg) scaleX(.82);">20</div>
<div class="t" style="left:148px;top:180.3px;width:20px;height:10px;line-height:10px;text-align:center;font-size:5.4px;color:#333;transform:rotate(-90deg) scaleX(.82);">30</div>
<div class="t" style="left:148px;top:267.40000000000003px;width:20px;height:10px;line-height:10px;text-align:center;font-size:5.4px;color:#333;transform:rotate(-90deg) scaleX(.82);">40</div>
<div id="canvas" style="left:166px;top:54px;width:422.6px;height:268px;overflow:hidden;border-left:1px solid #858585;border-top:1px solid #858585;box-sizing:border-box;background-color:#fff;background-image:radial-gradient(circle,#dcdcdc 0.55px,rgba(255,255,255,0) 0.9px);background-size:8.745px 8.71px;background-position:0.42px 5px;">
<div style="left:-167px;top:-55px;width:748px;height:531px;">
<div style="left:167px;top:55px;width:1px;height:268px;background:rgba(125,125,125,.4);"></div>
<div style="left:167px;top:55px;width:422.6px;height:1px;background:rgba(125,125,125,.4);"></div>
<svg style="left:0;top:0" width="748" height="531" viewBox="0 0 748 531"><defs><linearGradient id="gT" x1="0" y1="0" x2="0" y2="1"><stop offset="0" stop-color="#f7c3ab"/><stop offset=".3" stop-color="#f2a27e"/><stop offset="1" stop-color="#f8c2a8"/></linearGradient><linearGradient id="gR" x1="0" y1="0" x2="0" y2="1"><stop offset="0" stop-color="#b1c5df"/><stop offset="1" stop-color="#bdcee6"/></linearGradient><linearGradient id="gU" x1="0" y1="0" x2="0" y2="1"><stop offset="0" stop-color="#a9cdec"/><stop offset="1" stop-color="#d3e6f5"/></linearGradient></defs><path d="M216.4 330V68.3q0-3.5 3.5-3.5H335q3.5 0 3.5 3.5V330z" fill="#87cefa" stroke="#4a6880" stroke-width="1"/><path d="M216.9 76.4V68.5q0-3.2 3.2-3.2H334.8q3.2 0 3.2 3.2V76.4z" fill="url(#gT)"/><path d="M216.4 77V68.3q0-3.5 3.5-3.5H335q3.5 0 3.5 3.5V77" fill="none" stroke="#5c5656" stroke-width="1"/><rect x="215.9" y="76.3" width="123.1" height="1.8" fill="#4c5360"/><rect x="213.5" y="87.65" width="5.6" height="5.6" fill="#2bd42b" stroke="#16901a" stroke-width="0.8"/><circle cx="338.6" cy="90.45" r="1.8" fill="#f8fafc" stroke="#2a2a2a" stroke-width="1"/><circle cx="338.6" cy="99.2" r="1.8" fill="#f8fafc" stroke="#2a2a2a" stroke-width="1"/><circle cx="338.6" cy="108" r="1.8" fill="#f8fafc" stroke="#2a2a2a" stroke-width="1"/><rect x="215.9" y="111.5" width="123.1" height="1.6" fill="#2f5e84"/><rect x="213.5" y="122.7" width="5.6" height="5.6" fill="#2bd42b" stroke="#16901a" stroke-width="0.8"/><circle cx="338.6" cy="125.5" r="1.8" fill="#f8fafc" stroke="#2a2a2a" stroke-width="1"/><rect x="215.9" y="129" width="123.1" height="1.6" fill="#2f5e84"/><rect x="213.5" y="140.2" width="5.6" height="5.6" fill="#2bd42b" stroke="#16901a" stroke-width="0.8"/><circle cx="338.6" cy="143" r="1.8" fill="#f8fafc" stroke="#2a2a2a" stroke-width="1"/><rect x="215.9" y="146.2" width="123.1" height="1.6" fill="#2f5e84"/><circle cx="216" cy="160.3" r="1.8" fill="#f8fafc" stroke="#2a2a2a" stroke-width="1"/><circle cx="338.6" cy="160.3" r="1.8" fill="#f8fafc" stroke="#2a2a2a" stroke-width="1"/><rect x="213.5" y="166.2" width="5.6" height="5.6" fill="#2bd42b" stroke="#16901a" stroke-width="0.8"/><rect x="215.9" y="172.45" width="123.1" height="1.6" fill="#2f5e84"/><circle cx="216" cy="186.55" r="1.8" fill="#f8fafc" stroke="#2a2a2a" stroke-width="1"/><circle cx="338.6" cy="186.55" r="1.8" fill="#f8fafc" stroke="#2a2a2a" stroke-width="1"/><rect x="213.5" y="192.45" width="5.6" height="5.6" fill="#2bd42b" stroke="#16901a" stroke-width="0.8"/><rect x="215.9" y="198.7" width="123.1" height="1.6" fill="#2f5e84"/><circle cx="216" cy="212.8" r="1.8" fill="#f8fafc" stroke="#2a2a2a" stroke-width="1"/><circle cx="338.6" cy="212.8" r="1.8" fill="#f8fafc" stroke="#2a2a2a" stroke-width="1"/><rect x="213.5" y="218.7" width="5.6" height="5.6" fill="#2bd42b" stroke="#16901a" stroke-width="0.8"/><rect x="215.9" y="224.95" width="123.1" height="1.6" fill="#2f5e84"/><circle cx="216" cy="239.05" r="1.8" fill="#f8fafc" stroke="#2a2a2a" stroke-width="1"/><circle cx="338.6" cy="239.05" r="1.8" fill="#f8fafc" stroke="#2a2a2a" stroke-width="1"/><rect x="213.5" y="244.95" width="5.6" height="5.6" fill="#2bd42b" stroke="#16901a" stroke-width="0.8"/><rect x="215.9" y="251.2" width="123.1" height="1.6" fill="#2f5e84"/><circle cx="216" cy="265.3" r="1.8" fill="#f8fafc" stroke="#2a2a2a" stroke-width="1"/><circle cx="338.6" cy="265.3" r="1.8" fill="#f8fafc" stroke="#2a2a2a" stroke-width="1"/><circle cx="216" cy="274" r="1.8" fill="#f8fafc" stroke="#2a2a2a" stroke-width="1"/><rect x="215.9" y="277.45" width="123.1" height="1.6" fill="#2f5e84"/><circle cx="216" cy="291.55" r="1.8" fill="#f8fafc" stroke="#2a2a2a" stroke-width="1"/><circle cx="338.6" cy="291.55" r="1.8" fill="#f8fafc" stroke="#2a2a2a" stroke-width="1"/><rect x="213.5" y="297.45" width="5.6" height="5.6" fill="#2bd42b" stroke="#16901a" stroke-width="0.8"/><rect x="215.9" y="303.7" width="123.1" height="1.6" fill="#2f5e84"/><circle cx="216" cy="317.8" r="1.8" fill="#f8fafc" stroke="#2a2a2a" stroke-width="1"/><circle cx="338.6" cy="317.8" r="1.8" fill="#f8fafc" stroke="#2a2a2a" stroke-width="1"/><rect x="213.5" y="323.7" width="5.6" height="5.6" fill="#2bd42b" stroke="#16901a" stroke-width="0.8"/><rect x="355.9" y="195.7" width="87.8" height="34.6" rx="3" fill="url(#gR)" stroke="#6f7f8f" stroke-width="1"/><path d="M356.4 207V198.79999999999998q0-2.6 2.6-2.6H440.59999999999997q2.6 0 2.6 2.6V207z" fill="url(#gT)"/><rect x="356.4" y="206.9" width="86.8" height="0.9" fill="#8a7f86"/><rect x="353.3" y="209.8" width="5.6" height="5.6" fill="#2bd42b" stroke="#16901a" stroke-width="0.8"/><circle cx="443.6" cy="212.6" r="1.8" fill="#f8fafc" stroke="#2a2a2a" stroke-width="1"/><rect x="353.3" y="218.6" width="5.6" height="5.6" fill="#2bd42b" stroke="#16901a" stroke-width="0.8"/><circle cx="443.6" cy="221.4" r="1.8" fill="#f8fafc" stroke="#2a2a2a" stroke-width="1"/><rect x="460.7" y="186.7" width="70" height="43" rx="3" fill="#fdf5e4" stroke="#c58c84" stroke-width="1"/><path d="M461.2 198V189.79999999999998q0-2.6 2.6-2.6H527.6q2.6 0 2.6 2.6V198z" fill="url(#gU)"/><rect x="461.2" y="197.9" width="69" height="0.8" fill="#c9a6a0"/><rect x="458.2" y="201.2" width="5.6" height="5.6" fill="#e0301c" stroke="#8a1408" stroke-width="0.8"/><rect x="458.2" y="210.1" width="5.6" height="5.6" fill="#2bd42b" stroke="#16901a" stroke-width="0.8"/><rect x="458.2" y="218.6" width="5.6" height="5.6" fill="#2bd42b" stroke="#16901a" stroke-width="0.8"/><circle cx="530.7" cy="204" r="1.8" fill="#f8fafc" stroke="#c0406a" stroke-width="1"/></svg>
<svg style="left:218.4px;top:66.2px;" width="9" height="9" viewBox="0 0 9 9"><circle cx="4.5" cy="4.5" r="4" fill="#5fb3bf" stroke="#6f7f86" stroke-width=".8"/><ellipse cx="4.5" cy="4.5" rx="2.6" ry="1.5" fill="#cfeef0"/></svg>
<div class="t" style="top:66px;height:10px;line-height:10px;font-size:6.9px;color:#26140c;white-space:nowrap;font-weight:bold;left:229.6px;transform:scaleX(0.88);transform-origin:left center;-webkit-text-stroke:.3px;">NodeMCU ESP-12</div>
<svg style="left:320.6px;top:66px;" width="8" height="9" viewBox="0 0 8 9"><path d="M1.2 7.8L6.4 1.6" stroke="#7a6a5c" stroke-width="1.3"/><circle cx="6.2" cy="1.8" r="1.4" fill="none" stroke="#a59a90" stroke-width=".9"/><path d="M1.4 1.4l5.4 6.4" stroke="#b5aaa0" stroke-width="1.1"/><path d="M5.4 6.2l1.6 1.8" stroke="#5a4a40" stroke-width="1.5"/></svg>
<svg style="left:330.8px;top:69.4px;" width="4.6" height="3.4" viewBox="0 0 4.6 3.4"><path d="M.5.6h3.6L2.3 2.6z" fill="#fbe4d8" stroke="#e88a6c" stroke-width=".5"/></svg>
<div class="t" style="top:78px;height:10px;line-height:10px;font-size:6.9px;color:#08192b;white-space:nowrap;left:127.60000000000002px;width:300px;text-align:center;transform:scaleX(0.865);transform-origin:center center;-webkit-text-stroke:.3px;">Modules.WiFi.Sockets.UDP Socket1</div>
<svg style="left:219.8px;top:86.25px;" width="7.6" height="8.4" viewBox="0 0 7.6 8.4"><rect x=".4" y=".4" width="6.8" height="7.6" fill="#eef2f5" stroke="#8794a0" stroke-width=".6"/><rect x="1.4" y=".4" width="4.8" height="1.6" fill="#c3ccd4"/><path d="M1.8 3.2h4M1.8 4.6h4M1.8 6h4" stroke="#9ba8b4" stroke-width=".6"/></svg>
<div class="t" style="top:86px;height:10px;line-height:10px;font-size:6.9px;color:#08192b;white-space:nowrap;left:228.3px;transform:scaleX(0.84);transform-origin:left center;-webkit-text-stroke:.3px;">In</div>
<div class="t" style="top:86px;height:10px;line-height:10px;font-size:6.9px;color:#08192b;white-space:nowrap;right:420.8px;transform:scaleX(0.84);transform-origin:right center;-webkit-text-stroke:.3px;">Out</div>
<svg style="left:328.2px;top:86.25px;" width="7.6" height="8.4" viewBox="0 0 7.6 8.4"><rect x=".4" y=".4" width="6.8" height="7.6" fill="#eef2f5" stroke="#8794a0" stroke-width=".6"/><rect x="1.4" y=".4" width="4.8" height="1.6" fill="#c3ccd4"/><path d="M1.8 3.2h4M1.8 4.6h4M1.8 6h4" stroke="#9ba8b4" stroke-width=".6"/></svg>
<div class="t" style="top:94px;height:10px;line-height:10px;font-size:6.9px;color:#08192b;white-space:nowrap;right:421px;transform:scaleX(0.84);transform-origin:right center;-webkit-text-stroke:.3px;">RemoteIP</div>
<svg style="left:327.4px;top:94.6px;" width="9" height="9" viewBox="0 0 9 9"><rect x=".5" y=".6" width="8" height="5.6" rx="1.2" fill="#3f8fd8" stroke="#2a66a8" stroke-width=".5"/><rect x="1.4" y="1.4" width="6.2" height="3.4" rx=".6" fill="#7fc0f0"/><path d="M3 7.4h3M1.4 8.4h6.2" stroke="#3a5a7a" stroke-width=".9"/></svg>
<div class="t" style="top:103px;height:10px;line-height:10px;font-size:6.9px;color:#08192b;white-space:nowrap;right:421.4px;transform:scaleX(0.84);transform-origin:right center;-webkit-text-stroke:.3px;">RemotePort</div>
<div class="t" style="top:103px;height:10px;line-height:10px;font-size:6.4px;color:#e61ee6;white-space:nowrap;font-weight:bold;left:327.2px;transform:scaleX(0.78);transform-origin:left center;text-shadow:0 0 1.5px #f070f0;-webkit-text-stroke:.3px;">U32</div>
<div class="t" style="top:112px;height:10px;line-height:10px;font-size:6.9px;color:#08192b;white-space:nowrap;left:127.60000000000002px;width:300px;text-align:center;transform:scaleX(0.84);transform-origin:center center;-webkit-text-stroke:.3px;">Serial[0]</div>
<svg style="left:219.8px;top:121.7px;" width="7.4" height="7.6" viewBox="0 0 7.4 7.6"><ellipse cx="3.6" cy="2.6" rx="3.2" ry="2.2" fill="#e9e4de" stroke="#9a948c" stroke-width=".6"/><path d="M3.6 4.8v2.4" stroke="#8b98a4" stroke-width="1.2"/></svg>
<div class="t" style="top:121px;height:10px;line-height:10px;font-size:6.9px;color:#08192b;white-space:nowrap;left:228.3px;transform:scaleX(0.84);transform-origin:left center;-webkit-text-stroke:.3px;">In</div>
<div class="t" style="top:121px;height:10px;line-height:10px;font-size:6.9px;color:#08192b;white-space:nowrap;right:420.8px;transform:scaleX(0.84);transform-origin:right center;-webkit-text-stroke:.3px;">Out</div>
<svg style="left:328.2px;top:121.3px;" width="7.6" height="8.4" viewBox="0 0 7.6 8.4"><rect x=".4" y=".4" width="6.8" height="7.6" fill="#eef2f5" stroke="#8794a0" stroke-width=".6"/><rect x="1.4" y=".4" width="4.8" height="1.6" fill="#c3ccd4"/><path d="M1.8 3.2h4M1.8 4.6h4M1.8 6h4" stroke="#9ba8b4" stroke-width=".6"/></svg>
<div class="t" style="top:130px;height:10px;line-height:10px;font-size:6.9px;color:#08192b;white-space:nowrap;left:127.60000000000002px;width:300px;text-align:center;transform:scaleX(0.84);transform-origin:center center;-webkit-text-stroke:.3px;">Serial[1]</div>
<svg style="left:219.8px;top:139.2px;" width="7.4" height="7.6" viewBox="0 0 7.4 7.6"><ellipse cx="3.6" cy="2.6" rx="3.2" ry="2.2" fill="#e9e4de" stroke="#9a948c" stroke-width=".6"/><path d="M3.6 4.8v2.4" stroke="#8b98a4" stroke-width="1.2"/></svg>
<div class="t" style="top:138px;height:10px;line-height:10px;font-size:6.9px;color:#08192b;white-space:nowrap;left:228.3px;transform:scaleX(0.84);transform-origin:left center;-webkit-text-stroke:.3px;">In</div>
<div class="t" style="top:138px;height:10px;line-height:10px;font-size:6.9px;color:#08192b;white-space:nowrap;right:420.8px;transform:scaleX(0.84);transform-origin:right center;-webkit-text-stroke:.3px;">Out</div>
<svg style="left:328.2px;top:138.8px;" width="7.6" height="8.4" viewBox="0 0 7.6 8.4"><rect x=".4" y=".4" width="6.8" height="7.6" fill="#eef2f5" stroke="#8794a0" stroke-width=".6"/><rect x="1.4" y=".4" width="4.8" height="1.6" fill="#c3ccd4"/><path d="M1.8 3.2h4M1.8 4.6h4M1.8 6h4" stroke="#9ba8b4" stroke-width=".6"/></svg>
<svg style="left:259.2px;top:147.6px;" width="9.4" height="9.4" viewBox="0 0 9.4 9.4"><rect x="2.2" y=".5" width="6.4" height="6.6" rx="1.2" fill="#f4937c" stroke="#e04428" stroke-width=".9"/><path d="M4.4 2.2h2.4v3H4.4z" fill="#fbd3c8"/><path d="M.6 8.4l1.8-3.6 3 2.2z" fill="#b8cc3a" stroke="#7f9a20" stroke-width=".5"/></svg>
<div class="t" style="top:147px;height:10px;line-height:10px;font-size:6.9px;color:#08192b;white-space:nowrap;left:269.4px;transform:scaleX(0.84);transform-origin:left center;-webkit-text-stroke:.3px;">Digital[ 0 ]</div>
<svg style="left:219.8px;top:156.9px;" width="7.2" height="6.6" viewBox="0 0 7.2 6.6"><path d="M.5 5.2V.5l2.1 2.5L4 1.3l2.7 3.9z" fill="#d6261a"/><path d="M.3 5.6h6.6" stroke="#f0a030" stroke-width="1"/></svg>
<div class="t" style="top:155px;height:10px;line-height:10px;font-size:6.9px;color:#08192b;white-space:nowrap;left:228.3px;transform:scaleX(0.84);transform-origin:left center;-webkit-text-stroke:.3px;">Analog(PWM)</div>
<div class="t" style="top:156px;height:10px;line-height:10px;font-size:6.9px;color:#08192b;white-space:nowrap;right:420.8px;transform:scaleX(0.84);transform-origin:right center;-webkit-text-stroke:.3px;">Out</div>
<svg style="left:328.2px;top:156.60000000000002px;" width="6.8" height="7.4" viewBox="0 0 6.8 7.4"><path d="M.5 1.3L5 .5q1.2 0 1.2 1.2v4.8q0 1-1.2 1L.5 6.6z" fill="#f4907a" stroke="#e04428" stroke-width=".8"/><path d="M2.4 2.4h1.8v2.8H2.4z" fill="#fbd3c8" stroke="#ee7c62" stroke-width=".45"/></svg>
<svg style="left:219.8px;top:165.3px;" width="6.8" height="7.4" viewBox="0 0 6.8 7.4"><path d="M.5 1.3L5 .5q1.2 0 1.2 1.2v4.8q0 1-1.2 1L.5 6.6z" fill="#f4907a" stroke="#e04428" stroke-width=".8"/><path d="M2.4 2.4h1.8v2.8H2.4z" fill="#fbd3c8" stroke="#ee7c62" stroke-width=".45"/></svg>
<div class="t" style="top:164px;height:10px;line-height:10px;font-size:6.9px;color:#08192b;white-space:nowrap;left:228.3px;transform:scaleX(0.84);transform-origin:left center;-webkit-text-stroke:.3px;">Digital</div>
<svg style="left:259.2px;top:173.85px;" width="9.4" height="9.4" viewBox="0 0 9.4 9.4"><rect x="2.2" y=".5" width="6.4" height="6.6" rx="1.2" fill="#f4937c" stroke="#e04428" stroke-width=".9"/><path d="M4.4 2.2h2.4v3H4.4z" fill="#fbd3c8"/><path d="M.6 8.4l1.8-3.6 3 2.2z" fill="#b8cc3a" stroke="#7f9a20" stroke-width=".5"/></svg>
<div class="t" style="top:174px;height:10px;line-height:10px;font-size:6.9px;color:#08192b;white-space:nowrap;left:269.4px;transform:scaleX(0.84);transform-origin:left center;-webkit-text-stroke:.3px;">Digital[ 1 ]</div>
<svg style="left:219.8px;top:183.15px;" width="7.2" height="6.6" viewBox="0 0 7.2 6.6"><path d="M.5 5.2V.5l2.1 2.5L4 1.3l2.7 3.9z" fill="#d6261a"/><path d="M.3 5.6h6.6" stroke="#f0a030" stroke-width="1"/></svg>
<div class="t" style="top:182px;height:10px;line-height:10px;font-size:6.9px;color:#08192b;white-space:nowrap;left:228.3px;transform:scaleX(0.84);transform-origin:left center;-webkit-text-stroke:.3px;">Analog(PWM)</div>
<div class="t" style="top:182px;height:10px;line-height:10px;font-size:6.9px;color:#08192b;white-space:nowrap;right:420.8px;transform:scaleX(0.84);transform-origin:right center;-webkit-text-stroke:.3px;">Out</div>
<svg style="left:328.2px;top:182.85000000000002px;" width="6.8" height="7.4" viewBox="0 0 6.8 7.4"><path d="M.5 1.3L5 .5q1.2 0 1.2 1.2v4.8q0 1-1.2 1L.5 6.6z" fill="#f4907a" stroke="#e04428" stroke-width=".8"/><path d="M2.4 2.4h1.8v2.8H2.4z" fill="#fbd3c8" stroke="#ee7c62" stroke-width=".45"/></svg>
<svg style="left:219.8px;top:191.55px;" width="6.8" height="7.4" viewBox="0 0 6.8 7.4"><path d="M.5 1.3L5 .5q1.2 0 1.2 1.2v4.8q0 1-1.2 1L.5 6.6z" fill="#f4907a" stroke="#e04428" stroke-width=".8"/><path d="M2.4 2.4h1.8v2.8H2.4z" fill="#fbd3c8" stroke="#ee7c62" stroke-width=".45"/></svg>
<div class="t" style="top:190px;height:10px;line-height:10px;font-size:6.9px;color:#08192b;white-space:nowrap;left:228.3px;transform:scaleX(0.84);transform-origin:left center;-webkit-text-stroke:.3px;">Digital</div>
<svg style="left:259.2px;top:200.1px;" width="9.4" height="9.4" viewBox="0 0 9.4 9.4"><rect x="2.2" y=".5" width="6.4" height="6.6" rx="1.2" fill="#f4937c" stroke="#e04428" stroke-width=".9"/><path d="M4.4 2.2h2.4v3H4.4z" fill="#fbd3c8"/><path d="M.6 8.4l1.8-3.6 3 2.2z" fill="#b8cc3a" stroke="#7f9a20" stroke-width=".5"/></svg>
<div class="t" style="top:200px;height:10px;line-height:10px;font-size:6.9px;color:#08192b;white-space:nowrap;left:269.4px;transform:scaleX(0.84);transform-origin:left center;-webkit-text-stroke:.3px;">Digital[ 2 ]</div>
<svg style="left:219.8px;top:209.4px;" width="7.2" height="6.6" viewBox="0 0 7.2 6.6"><path d="M.5 5.2V.5l2.1 2.5L4 1.3l2.7 3.9z" fill="#d6261a"/><path d="M.3 5.6h6.6" stroke="#f0a030" stroke-width="1"/></svg>
<div class="t" style="top:208px;height:10px;line-height:10px;font-size:6.9px;color:#08192b;white-space:nowrap;left:228.3px;transform:scaleX(0.84);transform-origin:left center;-webkit-text-stroke:.3px;">Analog(PWM)</div>
<div class="t" style="top:208px;height:10px;line-height:10px;font-size:6.9px;color:#08192b;white-space:nowrap;right:420.8px;transform:scaleX(0.84);transform-origin:right center;-webkit-text-stroke:.3px;">Out</div>
<svg style="left:328.2px;top:209.10000000000002px;" width="6.8" height="7.4" viewBox="0 0 6.8 7.4"><path d="M.5 1.3L5 .5q1.2 0 1.2 1.2v4.8q0 1-1.2 1L.5 6.6z" fill="#f4907a" stroke="#e04428" stroke-width=".8"/><path d="M2.4 2.4h1.8v2.8H2.4z" fill="#fbd3c8" stroke="#ee7c62" stroke-width=".45"/></svg>
<svg style="left:219.8px;top:217.8px;" width="6.8" height="7.4" viewBox="0 0 6.8 7.4"><path d="M.5 1.3L5 .5q1.2 0 1.2 1.2v4.8q0 1-1.2 1L.5 6.6z" fill="#f4907a" stroke="#e04428" stroke-width=".8"/><path d="M2.4 2.4h1.8v2.8H2.4z" fill="#fbd3c8" stroke="#ee7c62" stroke-width=".45"/></svg>
<div class="t" style="top:217px;height:10px;line-height:10px;font-size:6.9px;color:#08192b;white-space:nowrap;left:228.3px;transform:scaleX(0.84);transform-origin:left center;-webkit-text-stroke:.3px;">Digital</div>
<svg style="left:259.2px;top:226.35px;" width="9.4" height="9.4" viewBox="0 0 9.4 9.4"><rect x="2.2" y=".5" width="6.4" height="6.6" rx="1.2" fill="#f4937c" stroke="#e04428" stroke-width=".9"/><path d="M4.4 2.2h2.4v3H4.4z" fill="#fbd3c8"/><path d="M.6 8.4l1.8-3.6 3 2.2z" fill="#b8cc3a" stroke="#7f9a20" stroke-width=".5"/></svg>
<div class="t" style="top:226px;height:10px;line-height:10px;font-size:6.9px;color:#08192b;white-space:nowrap;left:269.4px;transform:scaleX(0.84);transform-origin:left center;-webkit-text-stroke:.3px;">Digital[ 3 ]</div>
<svg style="left:219.8px;top:235.65px;" width="7.2" height="6.6" viewBox="0 0 7.2 6.6"><path d="M.5 5.2V.5l2.1 2.5L4 1.3l2.7 3.9z" fill="#d6261a"/><path d="M.3 5.6h6.6" stroke="#f0a030" stroke-width="1"/></svg>
<div class="t" style="top:234px;height:10px;line-height:10px;font-size:6.9px;color:#08192b;white-space:nowrap;left:228.3px;transform:scaleX(0.84);transform-origin:left center;-webkit-text-stroke:.3px;">Analog(PWM)</div>
<div class="t" style="top:234px;height:10px;line-height:10px;font-size:6.9px;color:#08192b;white-space:nowrap;right:420.8px;transform:scaleX(0.84);transform-origin:right center;-webkit-text-stroke:.3px;">Out</div>
<svg style="left:328.2px;top:235.35000000000002px;" width="6.8" height="7.4" viewBox="0 0 6.8 7.4"><path d="M.5 1.3L5 .5q1.2 0 1.2 1.2v4.8q0 1-1.2 1L.5 6.6z" fill="#f4907a" stroke="#e04428" stroke-width=".8"/><path d="M2.4 2.4h1.8v2.8H2.4z" fill="#fbd3c8" stroke="#ee7c62" stroke-width=".45"/></svg>
<svg style="left:219.8px;top:244.05px;" width="6.8" height="7.4" viewBox="0 0 6.8 7.4"><path d="M.5 1.3L5 .5q1.2 0 1.2 1.2v4.8q0 1-1.2 1L.5 6.6z" fill="#f4907a" stroke="#e04428" stroke-width=".8"/><path d="M2.4 2.4h1.8v2.8H2.4z" fill="#fbd3c8" stroke="#ee7c62" stroke-width=".45"/></svg>
<div class="t" style="top:243px;height:10px;line-height:10px;font-size:6.9px;color:#08192b;white-space:nowrap;left:228.3px;transform:scaleX(0.84);transform-origin:left center;-webkit-text-stroke:.3px;">Digital</div>
<svg style="left:259.2px;top:252.6px;" width="9.4" height="9.4" viewBox="0 0 9.4 9.4"><rect x="2.2" y=".5" width="6.4" height="6.6" rx="1.2" fill="#f4937c" stroke="#e04428" stroke-width=".9"/><path d="M4.4 2.2h2.4v3H4.4z" fill="#fbd3c8"/><path d="M.6 8.4l1.8-3.6 3 2.2z" fill="#b8cc3a" stroke="#7f9a20" stroke-width=".5"/></svg>
<div class="t" style="top:252px;height:10px;line-height:10px;font-size:6.9px;color:#08192b;white-space:nowrap;left:269.4px;transform:scaleX(0.84);transform-origin:left center;-webkit-text-stroke:.3px;">Digital[ 4 ]</div>
<svg style="left:219.8px;top:261.90000000000003px;" width="7.2" height="6.6" viewBox="0 0 7.2 6.6"><path d="M.5 5.2V.5l2.1 2.5L4 1.3l2.7 3.9z" fill="#d6261a"/><path d="M.3 5.6h6.6" stroke="#f0a030" stroke-width="1"/></svg>
<div class="t" style="top:260px;height:10px;line-height:10px;font-size:6.9px;color:#08192b;white-space:nowrap;left:228.3px;transform:scaleX(0.84);transform-origin:left center;-webkit-text-stroke:.3px;">Analog(PWM)</div>
<div class="t" style="top:261px;height:10px;line-height:10px;font-size:6.9px;color:#08192b;white-space:nowrap;right:420.8px;transform:scaleX(0.84);transform-origin:right center;-webkit-text-stroke:.3px;">Out</div>
<svg style="left:328.2px;top:261.6px;" width="6.8" height="7.4" viewBox="0 0 6.8 7.4"><path d="M.5 1.3L5 .5q1.2 0 1.2 1.2v4.8q0 1-1.2 1L.5 6.6z" fill="#f4907a" stroke="#e04428" stroke-width=".8"/><path d="M2.4 2.4h1.8v2.8H2.4z" fill="#fbd3c8" stroke="#ee7c62" stroke-width=".45"/></svg>
<svg style="left:219.8px;top:270.3px;" width="6.8" height="7.4" viewBox="0 0 6.8 7.4"><path d="M.5 1.3L5 .5q1.2 0 1.2 1.2v4.8q0 1-1.2 1L.5 6.6z" fill="#f4907a" stroke="#e04428" stroke-width=".8"/><path d="M2.4 2.4h1.8v2.8H2.4z" fill="#fbd3c8" stroke="#ee7c62" stroke-width=".45"/></svg>
<div class="t" style="top:269px;height:10px;line-height:10px;font-size:6.9px;color:#08192b;white-space:nowrap;left:228.3px;transform:scaleX(0.84);transform-origin:left center;-webkit-text-stroke:.3px;">Digital</div>
<svg style="left:259.2px;top:278.84999999999997px;" width="9.4" height="9.4" viewBox="0 0 9.4 9.4"><rect x="2.2" y=".5" width="6.4" height="6.6" rx="1.2" fill="#f4937c" stroke="#e04428" stroke-width=".9"/><path d="M4.4 2.2h2.4v3H4.4z" fill="#fbd3c8"/><path d="M.6 8.4l1.8-3.6 3 2.2z" fill="#b8cc3a" stroke="#7f9a20" stroke-width=".5"/></svg>
<div class="t" style="top:279px;height:10px;line-height:10px;font-size:6.9px;color:#08192b;white-space:nowrap;left:269.4px;transform:scaleX(0.84);transform-origin:left center;-webkit-text-stroke:.3px;">Digital[ 5 ]</div>
<svg style="left:219.8px;top:288.15000000000003px;" width="7.2" height="6.6" viewBox="0 0 7.2 6.6"><path d="M.5 5.2V.5l2.1 2.5L4 1.3l2.7 3.9z" fill="#d6261a"/><path d="M.3 5.6h6.6" stroke="#f0a030" stroke-width="1"/></svg>
<div class="t" style="top:287px;height:10px;line-height:10px;font-size:6.9px;color:#08192b;white-space:nowrap;left:228.3px;transform:scaleX(0.84);transform-origin:left center;-webkit-text-stroke:.3px;">Analog(PWM)</div>
<div class="t" style="top:287px;height:10px;line-height:10px;font-size:6.9px;color:#08192b;white-space:nowrap;right:420.8px;transform:scaleX(0.84);transform-origin:right center;-webkit-text-stroke:.3px;">Out</div>
<svg style="left:328.2px;top:287.85px;" width="6.8" height="7.4" viewBox="0 0 6.8 7.4"><path d="M.5 1.3L5 .5q1.2 0 1.2 1.2v4.8q0 1-1.2 1L.5 6.6z" fill="#f4907a" stroke="#e04428" stroke-width=".8"/><path d="M2.4 2.4h1.8v2.8H2.4z" fill="#fbd3c8" stroke="#ee7c62" stroke-width=".45"/></svg>
<svg style="left:219.8px;top:296.55px;" width="6.8" height="7.4" viewBox="0 0 6.8 7.4"><path d="M.5 1.3L5 .5q1.2 0 1.2 1.2v4.8q0 1-1.2 1L.5 6.6z" fill="#f4907a" stroke="#e04428" stroke-width=".8"/><path d="M2.4 2.4h1.8v2.8H2.4z" fill="#fbd3c8" stroke="#ee7c62" stroke-width=".45"/></svg>
<div class="t" style="top:295px;height:10px;line-height:10px;font-size:6.9px;color:#08192b;white-space:nowrap;left:228.3px;transform:scaleX(0.84);transform-origin:left center;-webkit-text-stroke:.3px;">Digital</div>
<svg style="left:259.2px;top:305.09999999999997px;" width="9.4" height="9.4" viewBox="0 0 9.4 9.4"><rect x="2.2" y=".5" width="6.4" height="6.6" rx="1.2" fill="#f4937c" stroke="#e04428" stroke-width=".9"/><path d="M4.4 2.2h2.4v3H4.4z" fill="#fbd3c8"/><path d="M.6 8.4l1.8-3.6 3 2.2z" fill="#b8cc3a" stroke="#7f9a20" stroke-width=".5"/></svg>
<div class="t" style="top:305px;height:10px;line-height:10px;font-size:6.9px;color:#08192b;white-space:nowrap;left:269.4px;transform:scaleX(0.84);transform-origin:left center;-webkit-text-stroke:.3px;">Digital[ 6 ]</div>
<svg style="left:219.8px;top:314.40000000000003px;" width="7.2" height="6.6" viewBox="0 0 7.2 6.6"><path d="M.5 5.2V.5l2.1 2.5L4 1.3l2.7 3.9z" fill="#d6261a"/><path d="M.3 5.6h6.6" stroke="#f0a030" stroke-width="1"/></svg>
<div class="t" style="top:313px;height:10px;line-height:10px;font-size:6.9px;color:#08192b;white-space:nowrap;left:228.3px;transform:scaleX(0.84);transform-origin:left center;-webkit-text-stroke:.3px;">Analog(PWM)</div>
<div class="t" style="top:313px;height:10px;line-height:10px;font-size:6.9px;color:#08192b;white-space:nowrap;right:420.8px;transform:scaleX(0.84);transform-origin:right center;-webkit-text-stroke:.3px;">Out</div>
<svg style="left:328.2px;top:314.1px;" width="6.8" height="7.4" viewBox="0 0 6.8 7.4"><path d="M.5 1.3L5 .5q1.2 0 1.2 1.2v4.8q0 1-1.2 1L.5 6.6z" fill="#f4907a" stroke="#e04428" stroke-width=".8"/><path d="M2.4 2.4h1.8v2.8H2.4z" fill="#fbd3c8" stroke="#ee7c62" stroke-width=".45"/></svg>
<svg style="left:219.8px;top:322.8px;" width="6.8" height="7.4" viewBox="0 0 6.8 7.4"><path d="M.5 1.3L5 .5q1.2 0 1.2 1.2v4.8q0 1-1.2 1L.5 6.6z" fill="#f4907a" stroke="#e04428" stroke-width=".8"/><path d="M2.4 2.4h1.8v2.8H2.4z" fill="#fbd3c8" stroke="#ee7c62" stroke-width=".45"/></svg>
<div class="t" style="top:322px;height:10px;line-height:10px;font-size:6.9px;color:#08192b;white-space:nowrap;left:228.3px;transform:scaleX(0.84);transform-origin:left center;-webkit-text-stroke:.3px;">Digital</div>
<svg style="left:358.2px;top:197.4px;" width="8" height="8" viewBox="0 0 8 8"><circle cx="4" cy="4.2" r="3.2" fill="#2a2a2a"/><path d="M1 2l3 2.2" stroke="#ddd" stroke-width=".9"/><circle cx="4" cy="4.2" r="1.2" fill="#888"/></svg>
<div class="t" style="top:197px;height:10px;line-height:10px;font-size:6.7px;color:#26140c;white-space:nowrap;font-weight:bold;left:369.2px;transform:scaleX(0.845);transform-origin:left center;-webkit-text-stroke:.3px;">RotaryEncoderSensor1</div>
<svg style="left:359.8px;top:208.9px;" width="6.8" height="7.4" viewBox="0 0 6.8 7.4"><path d="M.5 1.3L5 .5q1.2 0 1.2 1.2v4.8q0 1-1.2 1L.5 6.6z" fill="#f4907a" stroke="#e04428" stroke-width=".8"/><path d="M2.4 2.4h1.8v2.8H2.4z" fill="#fbd3c8" stroke="#ee7c62" stroke-width=".45"/></svg>
<div class="t" style="top:208px;height:10px;line-height:10px;font-size:6.9px;color:#08192b;white-space:nowrap;left:368.2px;transform:scaleX(0.84);transform-origin:left center;-webkit-text-stroke:.3px;">Clock(A)</div>
<div class="t" style="top:208px;height:10px;line-height:10px;font-size:6.9px;color:#08192b;white-space:nowrap;right:316.4px;transform:scaleX(0.84);transform-origin:right center;-webkit-text-stroke:.3px;">Up</div>
<svg style="left:433px;top:208.79999999999998px;" width="7.2" height="7.4" viewBox="0 0 7.2 7.4"><path d="M.4 6.4H2V.8h3.2v5.6h1.6" fill="none" stroke="#111" stroke-width=".9"/></svg>
<svg style="left:359.8px;top:217.70000000000002px;" width="6.8" height="7.4" viewBox="0 0 6.8 7.4"><path d="M.5 1.3L5 .5q1.2 0 1.2 1.2v4.8q0 1-1.2 1L.5 6.6z" fill="#f4907a" stroke="#e04428" stroke-width=".8"/><path d="M2.4 2.4h1.8v2.8H2.4z" fill="#fbd3c8" stroke="#ee7c62" stroke-width=".45"/></svg>
<div class="t" style="top:217px;height:10px;line-height:10px;font-size:6.9px;color:#08192b;white-space:nowrap;left:368.2px;transform:scaleX(0.84);transform-origin:left center;-webkit-text-stroke:.3px;">Direction(B)</div>
<div class="t" style="top:217px;height:10px;line-height:10px;font-size:6.9px;color:#08192b;white-space:nowrap;right:316.4px;transform:scaleX(0.84);transform-origin:right center;-webkit-text-stroke:.3px;">Down</div>
<svg style="left:433px;top:217.6px;" width="7.2" height="7.4" viewBox="0 0 7.2 7.4"><path d="M.4 6.4H2V.8h3.2v5.6h1.6" fill="none" stroke="#111" stroke-width=".9"/></svg>
<svg style="left:463.4px;top:188.6px;" width="9" height="7.6" viewBox="0 0 9 7.6"><rect x=".4" y=".8" width="8" height="5.8" rx=".8" fill="#23294a" stroke="#555" stroke-width=".5"/><path d="M1.4 3.8h6" stroke="#8fb4ff" stroke-width="1.2" stroke-dasharray="1.4 .6"/></svg>
<div class="t" style="top:188px;height:10px;line-height:10px;font-size:6.7px;color:#1a1a1a;white-space:nowrap;font-weight:bold;left:474.4px;transform:scaleX(0.875);transform-origin:left center;-webkit-text-stroke:.3px;">UpDownCounter1</div>
<svg style="left:465px;top:200.2px;" width="7.2" height="7.4" viewBox="0 0 7.2 7.4"><path d="M.4 6.4H2V.8h3.2v5.6h1.6" fill="none" stroke="#111" stroke-width=".9"/></svg>
<div class="t" style="top:199px;height:10px;line-height:10px;font-size:6.9px;color:#08192b;white-space:nowrap;left:473.2px;transform:scaleX(0.84);transform-origin:left center;-webkit-text-stroke:.3px;">Reset</div>
<svg style="left:465px;top:209.1px;" width="7.2" height="7.4" viewBox="0 0 7.2 7.4"><path d="M.4 6.4H2V.8h3.2v5.6h1.6" fill="none" stroke="#111" stroke-width=".9"/></svg>
<div class="t" style="top:208px;height:10px;line-height:10px;font-size:6.9px;color:#08192b;white-space:nowrap;left:473.2px;transform:scaleX(0.84);transform-origin:left center;-webkit-text-stroke:.3px;">Up</div>
<svg style="left:465px;top:217.6px;" width="7.2" height="7.4" viewBox="0 0 7.2 7.4"><path d="M.4 6.4H2V.8h3.2v5.6h1.6" fill="none" stroke="#111" stroke-width=".9"/></svg>
<div class="t" style="top:217px;height:10px;line-height:10px;font-size:6.9px;color:#08192b;white-space:nowrap;left:473.2px;transform:scaleX(0.84);transform-origin:left center;-webkit-text-stroke:.3px;">Down</div>
<div class="t" style="top:199px;height:10px;line-height:10px;font-size:6.9px;color:#08192b;white-space:nowrap;right:228.60000000000002px;transform:scaleX(0.84);transform-origin:right center;-webkit-text-stroke:.3px;">Out</div>
<div class="t" style="top:199px;height:10px;line-height:10px;font-size:6.4px;color:#e61ee6;white-space:nowrap;font-weight:bold;left:519.6px;transform:scaleX(0.8);transform-origin:left center;text-shadow:0 0 1.5px #f070f0;-webkit-text-stroke:.3px;">I32</div>
<svg style="left:0px;top:0px;" width="748" height="531" viewBox="0 0 748 531"><path d="M339.6 212.6H354" fill="none" stroke="#1e1e8c" stroke-width="1.7"/><path d="M339.6 238.8C350 238.8 344 221.4 354 221.4" fill="none" stroke="#1e1e8c" stroke-width="1.7"/><path d="M340 265C400.4 261.8 396.6 187.2 458.4 203.6" fill="none" stroke="#a58a3c" stroke-width="3.2"/><path d="M340 265C400.4 261.8 396.6 187.2 458.4 203.6" fill="none" stroke="#f3e28e" stroke-width="1.7"/><rect x="336.8" y="263.6" width="2.8" height="2.8" fill="#2a2a55"/><path d="M444.2 212.9H458.4" fill="none" stroke="#b08a3c" stroke-width="2.4"/><path d="M444.2 212.9H458.4" fill="none" stroke="#d9b765" stroke-width=".9"/><path d="M444.2 221.4H458.4" fill="none" stroke="#b08a3c" stroke-width="2.4"/><path d="M444.2 221.4H458.4" fill="none" stroke="#d9b765" stroke-width=".9"/></svg>
</div></div>
<div style="left:588.6px;top:53.4px;width:10px;height:268.6px;background:#f0f0f0;"></div>
<div style="left:588.6px;top:102px;width:10px;height:75.5px;background:#cdcdcd;"></div>
<svg style="left:590.4px;top:57.6px;" width="6.4" height="5" viewBox="0 0 6.4 5"><path d="M.8 3.8l2.4-2.4 2.4 2.4" fill="none" stroke="#444" stroke-width="1"/></svg>
<svg style="left:590.4px;top:314.8px;" width="6.4" height="5" viewBox="0 0 6.4 5"><path d="M.8 1l2.4 2.4L5.6 1" fill="none" stroke="#444" stroke-width="1"/></svg>
<div style="left:165px;top:322px;width:423.6px;height:10px;background:#f0f0f0;"></div>
<div style="left:239px;top:322px;width:284.6px;height:9px;background:#cdcdcd;"></div>
<svg style="left:169.6px;top:323.8px;" width="5" height="6.4" viewBox="0 0 5 6.4"><path d="M3.8.8L1.4 3.2l2.4 2.4" fill="none" stroke="#444" stroke-width="1"/></svg>
<svg style="left:581.6px;top:323.8px;" width="5" height="6.4" viewBox="0 0 5 6.4"><path d="M1 .8l2.4 2.4L1 5.6" fill="none" stroke="#444" stroke-width="1"/></svg>
<div style="left:153px;top:332px;width:445.6px;height:12.6px;background:#f1f1f1;"></div>
<div class="t" style="top:334px;height:10px;line-height:10px;font-size:6.5px;color:#141414;white-space:nowrap;left:153.8px;transform:scaleX(0.95);transform-origin:left center;">705:512</div>
<div class="t" style="top:334px;height:10px;line-height:10px;font-size:6.5px;color:#141414;white-space:nowrap;left:193.4px;transform:scaleX(0.97);transform-origin:left center;">UpDownCounter1.__OpenWireRootUnit__.UpDownCounter1.ResetInputPin 704:512</div>
<div style="left:153px;top:344.6px;width:445.6px;height:28px;background:linear-gradient(90deg,#fcf3ea,#fcefe4);"></div>
<div class="t" style="top:348px;height:10px;line-height:10px;font-size:6.5px;color:#141414;white-space:nowrap;left:158.2px;transform:scaleX(0.95);transform-origin:left center;">Port:</div>
<div style="left:175.2px;top:347.4px;width:46.4px;height:10.8px;background:#e9e9e9;border:1px solid #c2c6cc;box-sizing:border-box;"></div>
<div class="t" style="top:348px;height:10px;line-height:10px;font-size:6.5px;color:#141414;white-space:nowrap;left:177.6px;transform:scaleX(0.81);transform-origin:left center;">COM5 (Unava</div>
<svg style="left:213.6px;top:350.8px;" width="6" height="4.5" viewBox="0 0 6 4.5"><path d="M.8.9l2.1 2.1L5 .9" fill="none" stroke="#333" stroke-width=".9"/></svg>
<div class="t" style="top:348px;height:10px;line-height:10px;font-size:6.5px;color:#141414;white-space:nowrap;left:226.2px;transform:scaleX(0.95);transform-origin:left center;">Speed:</div>
<div style="left:247.6px;top:347.4px;width:40px;height:10.8px;background:#fff;border:1px solid #c2c6cc;box-sizing:border-box;"></div>
<div class="t" style="top:348px;height:10px;line-height:10px;font-size:6.5px;color:#141414;white-space:nowrap;left:250px;transform:scaleX(0.95);transform-origin:left center;">9600</div>
<svg style="left:279.6px;top:350.8px;" width="6" height="4.5" viewBox="0 0 6 4.5"><path d="M.8.9l2.1 2.1L5 .9" fill="none" stroke="#333" stroke-width=".9"/></svg>
<div class="t" style="top:348px;height:10px;line-height:10px;font-size:6.5px;color:#141414;white-space:nowrap;left:291px;transform:scaleX(0.95);transform-origin:left center;"><u>F</u>ormat:</div>
<div style="left:316.4px;top:347.4px;width:96px;height:10.8px;background:linear-gradient(#f2f2f2,#e6e6e6);border:1px solid #c2c6cc;box-sizing:border-box;"></div>
<div class="t" style="top:348px;height:10px;line-height:10px;font-size:6.5px;color:#141414;white-space:nowrap;left:318.79999999999995px;transform:scaleX(0.95);transform-origin:left center;">Unformatted Text</div>
<svg style="left:404.4px;top:350.8px;" width="6" height="4.5" viewBox="0 0 6 4.5"><path d="M.8.9l2.1 2.1L5 .9" fill="none" stroke="#333" stroke-width=".9"/></svg>
<div style="left:416.2px;top:347px;width:47.4px;height:11.6px;background:#f0f0f0;border:1px solid #dedede;box-sizing:border-box;"></div>
<svg style="left:423.4px;top:348.8px;" width="8" height="8" viewBox="0 0 8 8"><rect x=".5" y="1.6" width="5.8" height="5.6" fill="#f4f4f4" stroke="#777" stroke-width=".7"/><path d="M2 6l2-3 1.6 2L7.4.8" fill="none" stroke="#555" stroke-width=".8"/></svg>
<div class="t" style="top:348px;height:10px;line-height:10px;font-size:6.5px;color:#141414;white-space:nowrap;left:433.8px;transform:scaleX(0.95);transform-origin:left center;">Connect</div>
<svg style="left:587.4px;top:347.4px;" width="9" height="9" viewBox="0 0 9 9"><path d="M1.2 1.2l6.6 6.6" stroke="#d43a2c" stroke-width="1.5"/><path d="M7.8 1.2L1.2 7.8" stroke="#3f73c4" stroke-width="1.5"/><path d="M6.6.6l2 2" stroke="#7f8a98" stroke-width="1.1"/></svg>
<div style="left:153px;top:361px;width:42px;height:12px;background:#fff;border:1px solid #c9cdd3;border-bottom:none;box-sizing:border-box;"></div>
<div style="left:195px;top:362.8px;width:32.6px;height:10px;background:#eef0f3;border:1px solid #c9cdd3;border-bottom:none;box-sizing:border-box;"></div>
<svg style="left:157.6px;top:362.8px;" width="7.4" height="6.4" viewBox="0 0 7.4 6.4"><rect x=".4" y=".4" width="6.6" height="5.4" fill="#1d2a22" stroke="#556" stroke-width=".6"/><path d="M1.4 1.8h2.6" stroke="#5fd06a" stroke-width=".8"/></svg>
<div class="t" style="top:362px;height:10px;line-height:10px;font-size:6.4px;color:#141414;white-space:nowrap;left:168.6px;transform:scaleX(0.95);transform-origin:left center;">Terminal</div>
<svg style="left:198.4px;top:364px;" width="7.4" height="6.4" viewBox="0 0 7.4 6.4"><rect x=".4" y=".4" width="6.6" height="5.4" fill="#3f7fd0" stroke="#2a5aa0" stroke-width=".6"/><path d="M1.2 3.4h1.4V1.8h2v3h1.4" fill="none" stroke="#fff" stroke-width=".7"/></svg>
<div class="t" style="top:363px;height:10px;line-height:10px;font-size:6.4px;color:#141414;white-space:nowrap;left:208.6px;transform:scaleX(0.95);transform-origin:left center;">Scope</div>
<div style="left:153px;top:372.6px;width:444px;height:151.4px;background:#fff;border-top:1px solid #d4d7dc;border-left:1px solid #d4d7dc;border-right:1px solid #d4d7dc;box-sizing:border-box;"></div>
<div style="left:159.2px;top:380.8px;width:6.8px;height:6.8px;background:#fff;border:.9px solid #707070;box-sizing:border-box;"></div>
<svg style="left:159.2px;top:380.8px;" width="6.8" height="6.8" viewBox="0 0 6.8 6.8"><path d="M1.5 3.4l1.4 1.5 2.4-3.3" fill="none" stroke="#111" stroke-width="1"/></svg>
<div class="t" style="top:380px;height:10px;line-height:10px;font-size:6.3px;color:#141414;white-space:nowrap;left:167.4px;transform:scaleX(0.93);transform-origin:left center;">Auto Scroll</div>
<div style="left:202.6px;top:380.8px;width:6.8px;height:6.8px;background:#fff;border:.9px solid #707070;box-sizing:border-box;"></div>
<div class="t" style="top:380px;height:10px;line-height:10px;font-size:6.3px;color:#141414;white-space:nowrap;left:210.8px;transform:scaleX(0.93);transform-origin:left center;">Hold</div>
<div style="left:545px;top:375.6px;width:47.8px;height:12.6px;background:#ececec;border:1px solid #bdbdbd;box-sizing:border-box;"></div>
<svg style="left:556.6px;top:377.4px;" width="8.6" height="8.6" viewBox="0 0 8.6 8.6"><path d="M1.4.8l3 3.4" stroke="#7a5a2a" stroke-width="1"/><path d="M3.4 4l2.6-1.2 2 3.8-4.4 1.2z" fill="#f0cf4a" stroke="#b89a24" stroke-width=".4"/></svg>
<div class="t" style="top:377px;height:10px;line-height:10px;font-size:6.4px;color:#141414;white-space:nowrap;left:567.8px;transform:scaleX(0.95);transform-origin:left center;">Clear</div>
<div style="left:155.2px;top:392.2px;width:440.6px;height:112px;background:#fff;border:1px solid #d3d6da;box-sizing:border-box;"></div>
<div style="left:585.6px;top:393.2px;width:9.2px;height:110px;background:#f4f4f4;"></div>
<svg style="left:587.4px;top:396.6px;" width="6" height="4.4" viewBox="0 0 6 4.4"><path d="M.8 3.4l2.2-2.2 2.2 2.2" fill="none" stroke="#bbb" stroke-width=".9"/></svg>
<svg style="left:587.4px;top:496px;" width="6" height="4.4" viewBox="0 0 6 4.4"><path d="M.8 1l2.2 2.2L5.2 1" fill="none" stroke="#bbb" stroke-width=".9"/></svg>
<div style="left:158.2px;top:509.2px;width:348px;height:11px;background:#fff;border:1px solid #dcdfe2;box-sizing:border-box;"></div>
<div style="left:509.2px;top:511.5px;width:6.8px;height:6.8px;background:#fff;border:.9px solid #707070;box-sizing:border-box;"></div>
<svg style="left:509.2px;top:511.5px;" width="6.8" height="6.8" viewBox="0 0 6.8 6.8"><path d="M1.5 3.4l1.4 1.5 2.4-3.3" fill="none" stroke="#111" stroke-width="1"/></svg>
<div class="t" style="top:510px;height:10px;line-height:10px;font-size:6.3px;color:#141414;white-space:nowrap;left:517.4px;transform:scaleX(0.93);transform-origin:left center;">Auto Clear</div>
<div style="left:553.4px;top:509.4px;width:37.4px;height:11px;background:#ececec;border:1px solid #cfcfcf;box-sizing:border-box;"></div>
<svg style="left:560.6px;top:511.4px;" width="8" height="7" viewBox="0 0 8 7"><rect x=".4" y=".8" width="6.6" height="5" fill="#e4e7ea" stroke="#7a7f86" stroke-width=".6"/><path d="M1.6 2.4h3.2M1.6 4h4.2" stroke="#555" stroke-width=".6"/></svg>
<div class="t" style="top:510px;height:10px;line-height:10px;font-size:6.4px;color:#141414;white-space:nowrap;left:571.6px;transform:scaleX(0.95);transform-origin:left center;">Send</div>
<div style="left:598.6px;top:41.4px;width:145.4px;height:482.6px;background:#f1f1f1;"></div>
<div style="left:598.6px;top:41.4px;width:145.4px;height:14px;background:#fcf0e5;"></div>
<div style="left:602.8px;top:43.6px;width:61px;height:10.8px;background:#fff;border:1px solid #c0c4ca;box-sizing:border-box;"></div>
<div class="t" style="top:44px;height:10px;line-height:10px;font-size:6.6px;color:#111;white-space:nowrap;left:605px;transform:scaleX(0.95);transform-origin:left center;">count</div>
<svg style="left:666.4px;top:44.6px;" width="9" height="9" viewBox="0 0 9 9"><path d="M1.2 1.2l6.6 6.6M7.8 1.2L1.2 7.8" stroke="#c62828" stroke-width="1.5"/><path d="M4.5.6v7.8" stroke="#555" stroke-width=".7"/></svg>
<div style="left:677.6px;top:43.4px;width:11.4px;height:11.4px;background:#b9d2ee;border:1px solid #5f8fd0;box-sizing:border-box;"></div>
<svg style="left:678.8px;top:44.4px;" width="9.2" height="9.2" viewBox="0 0 9.2 9.2"><path d="M4.6.8v4.6M3.2 2.8h2.8" stroke="#223a7a" stroke-width="1.1"/><path d="M.8 7.8c1.2-2.4 6.4-2.4 7.6 0z" fill="#2a4a9a"/></svg>
<svg style="left:689.4px;top:48px;" width="4" height="3" viewBox="0 0 4 3"><path d="M0 .3h3.4L1.7 2.3z" fill="#222"/></svg>
<svg style="left:694px;top:44.2px;" width="10" height="9.4" viewBox="0 0 10 9.4"><path d="M.5 1.2h3l.7.9h3.6v4.6H.5z" fill="#f4d55a" stroke="#b89a24" stroke-width=".55"/><path d="M4 4h4.6v3.8H4z" fill="#fbeeb0" stroke="#b89a24" stroke-width=".5"/></svg>
<svg style="left:706.4px;top:44.2px;" width="10" height="9.4" viewBox="0 0 10 9.4"><path d="M.5 1.2h3l.7.9h3.6v4.6H.5z" fill="#f4d55a" stroke="#b89a24" stroke-width=".55"/><rect x="3.6" y="3.8" width="5.4" height="4.6" rx=".6" fill="#58a6dc" stroke="#2e78b4" stroke-width=".5"/><rect x="4.8" y="5" width="3" height="2" fill="#d4ecfa"/></svg>
<svg style="left:718.6px;top:44.2px;" width="10" height="9.4" viewBox="0 0 10 9.4"><path d="M.5 1.2h3l.7.9h3.6v4.6H.5z" fill="#f4d55a" stroke="#b89a24" stroke-width=".55"/><rect x="3.6" y="3.8" width="5.4" height="4.6" rx=".6" fill="#58a6dc" stroke="#2e78b4" stroke-width=".5"/><rect x="4.8" y="5" width="3" height="2" fill="#d4ecfa"/></svg>
<svg style="left:730px;top:44.6px;" width="9" height="9" viewBox="0 0 9 9"><path d="M1.2 1.2l6.6 6.6" stroke="#d43a2c" stroke-width="1.5"/><path d="M7.8 1.2L1.2 7.8" stroke="#3f73c4" stroke-width="1.5"/><path d="M6.6.6l2 2" stroke="#7f8a98" stroke-width="1.1"/></svg>
<svg width="0" height="0" style="left:0;top:0"><defs><linearGradient id="gi" x1="0" y1="0" x2="0" y2="1"><stop offset="0" stop-color="#8a8a8a"/><stop offset="1" stop-color="#3a3a3a"/></linearGradient><linearGradient id="gl" x1="0" y1="0" x2="0" y2="1"><stop offset="0" stop-color="#2c3488"/><stop offset=".5" stop-color="#1a1c58"/><stop offset="1" stop-color="#0c0e30"/></linearGradient></defs></svg>
<div style="left:603px;top:58px;width:92.4px;height:68px;background:#fff;border:1.6px solid #242424;border-radius:4px;box-shadow:.5px .8px 1px rgba(0,0,0,.35);box-sizing:border-box;overflow:hidden;"><div style="left:0;top:0;width:92.4px;height:11px;background:linear-gradient(#525252,#9a9a9a);"></div></div>
<svg style="left:605.6px;top:59.6px;" width="8" height="8" viewBox="0 0 8 8"><path d="M1.2 1.2l5.6 5.6" stroke="#c9a64a" stroke-width="1.4"/><circle cx="1.8" cy="1.8" r="1.3" fill="none" stroke="#c9c9c9" stroke-width=".8"/></svg>
<div class="t" style="top:59px;height:10px;line-height:10px;font-size:6.7px;color:#e4e4e4;white-space:nowrap;left:615.2px;transform:scaleX(0.9);transform-origin:left center;">Measurement</div>
<div style="left:608.6px;top:74.6px;width:68.6px;height:44.4px;background:#fff;border:1.6px solid #3aa845;border-radius:3.5px;box-shadow:0 0 1.5px rgba(60,170,70,.6);box-sizing:border-box;overflow:hidden;"><div style="left:0;top:0;width:70px;height:10.6px;background:linear-gradient(#7fe072,#a9efa0);border-bottom:.6px solid #4fb84f;"></div></div>
<svg style="left:610.6px;top:76.8px;" width="9" height="7" viewBox="0 0 9 7"><text x="0" y="5.8" font-size="5.4" font-weight="bold" font-family="Liberation Sans,sans-serif"><tspan fill="#e03a2e">1</tspan><tspan fill="#3fae3a">2</tspan><tspan fill="#3a6ad8">3</tspan></text></svg>
<div class="t" style="top:76px;height:10px;line-height:10px;font-size:6.7px;color:#d4f7cf;white-space:nowrap;left:620.6px;transform:scaleX(0.9);transform-origin:left center;">Integer</div>
<svg style="left:614.8px;top:92px;" width="20.4" height="20.4" viewBox="0 0 20.4 20.4"><rect x=".4" y=".4" width="19.4" height="19.4" rx="1.8" fill="#5a5a5a" stroke="#2e2e2e" stroke-width=".8"/><rect x="1.6" y="1.4" width="17" height="17" rx="1" fill="url(#gi)"/><rect x="1.6" y="4" width="17" height="10.6" fill="url(#gl)"/><path d="M1.6 9.4h17" stroke="#5f7fe0" stroke-width=".5" opacity=".7"/><text x="10.6" y="11.4" font-size="5.4" font-weight="bold" fill="#b9d2ff" text-anchor="middle" font-family="Liberation Sans,sans-serif" letter-spacing="1.3">455</text><path d="M3.6 1.6v7M.8 4.4h5.6" stroke="#4fd04a" stroke-width="1.6" opacity=".9"/><path d="M8.6 15l8 2.2" stroke="#e03a2e" stroke-width="1.5"/></svg>
<svg style="left:638.6px;top:92px;" width="20.4" height="20.4" viewBox="0 0 20.4 20.4"><rect x=".4" y=".4" width="19.4" height="19.4" rx="1.8" fill="#5a5a5a" stroke="#2e2e2e" stroke-width=".8"/><rect x="1.6" y="1.4" width="17" height="17" rx="1" fill="url(#gi)"/><rect x="1.6" y="4" width="17" height="10.6" fill="url(#gl)"/><path d="M1.6 9.4h17" stroke="#5f7fe0" stroke-width=".5" opacity=".7"/><text x="10.6" y="11.4" font-size="5.4" font-weight="bold" fill="#b9d2ff" text-anchor="middle" font-family="Liberation Sans,sans-serif" letter-spacing="1.3">455</text></svg>
<div style="left:603px;top:130.4px;width:68.4px;height:44.4px;background:#fff;border:1.6px solid #242424;border-radius:4px;box-shadow:.5px .8px 1px rgba(0,0,0,.35);box-sizing:border-box;overflow:hidden;"><div style="left:0;top:0;width:68.4px;height:11px;background:linear-gradient(#525252,#9a9a9a);"></div></div>
<svg style="left:605.4px;top:132.6px;" width="9" height="7" viewBox="0 0 9 7"><text x="0" y="5.8" font-size="5.4" font-weight="bold" font-family="Liberation Sans,sans-serif"><tspan fill="#e03a2e">1</tspan><tspan fill="#3fae3a">2</tspan><tspan fill="#3a6ad8">3</tspan></text></svg>
<div class="t" style="top:132px;height:10px;line-height:10px;font-size:6.7px;color:#e4e4e4;white-space:nowrap;left:615.4px;transform:scaleX(0.9);transform-origin:left center;">Integer</div>
<svg style="left:609px;top:147.2px;" width="20.4" height="20.4" viewBox="0 0 20.4 20.4"><rect x=".4" y=".4" width="19.4" height="19.4" rx="1.8" fill="#5a5a5a" stroke="#2e2e2e" stroke-width=".8"/><rect x="1.6" y="1.4" width="17" height="17" rx="1" fill="url(#gi)"/><rect x="1.6" y="4" width="17" height="10.6" fill="url(#gl)"/><path d="M1.6 9.4h17" stroke="#5f7fe0" stroke-width=".5" opacity=".7"/><text x="10.6" y="11.4" font-size="5.4" font-weight="bold" fill="#b9d2ff" text-anchor="middle" font-family="Liberation Sans,sans-serif" letter-spacing="1.3">455</text><path d="M3.6 1.6v7M.8 4.4h5.6" stroke="#4fd04a" stroke-width="1.6" opacity=".9"/><path d="M8.6 15l8 2.2" stroke="#e03a2e" stroke-width="1.5"/></svg>
<svg style="left:633px;top:147.2px;" width="20.4" height="20.4" viewBox="0 0 20.4 20.4"><rect x=".4" y=".4" width="19.4" height="19.4" rx="1.8" fill="#5a5a5a" stroke="#2e2e2e" stroke-width=".8"/><rect x="1.6" y="1.4" width="17" height="17" rx="1" fill="url(#gi)"/><rect x="1.6" y="4" width="17" height="10.6" fill="url(#gl)"/><path d="M1.6 9.4h17" stroke="#5f7fe0" stroke-width=".5" opacity=".7"/><text x="10.6" y="11.4" font-size="5.4" font-weight="bold" fill="#b9d2ff" text-anchor="middle" font-family="Liberation Sans,sans-serif" letter-spacing="1.3">455</text></svg>
<div style="left:598.6px;top:511.6px;width:145.4px;height:12.4px;background:#fcf0e5;"></div>
<div class="t" style="top:514px;height:10px;line-height:10px;font-size:6.3px;color:#111;white-space:nowrap;font-weight:bold;left:650px;transform:scaleX(0.965);transform-origin:left center;">Arduino eBay Ads:</div>
<svg style="left:719.6px;top:513.6px;" width="9" height="9" viewBox="0 0 9 9"><path d="M1.2 1.2l6.6 6.6" stroke="#d43a2c" stroke-width="1.5"/><path d="M7.8 1.2L1.2 7.8" stroke="#3f73c4" stroke-width="1.5"/><path d="M6.6.6l2 2" stroke="#7f8a98" stroke-width="1.1"/></svg>
<svg style="left:732.6px;top:513.6px;" width="8.6" height="8.6" viewBox="0 0 8.6 8.6"><rect x=".4" y=".4" width="7.8" height="7.8" rx="1.4" fill="#d8342c"/><circle cx="4.3" cy="4.5" r="2.2" fill="none" stroke="#fff" stroke-width="1"/><path d="M4.3 1.4v2.6" stroke="#fff" stroke-width="1"/></svg>
</div>
</body></html>
